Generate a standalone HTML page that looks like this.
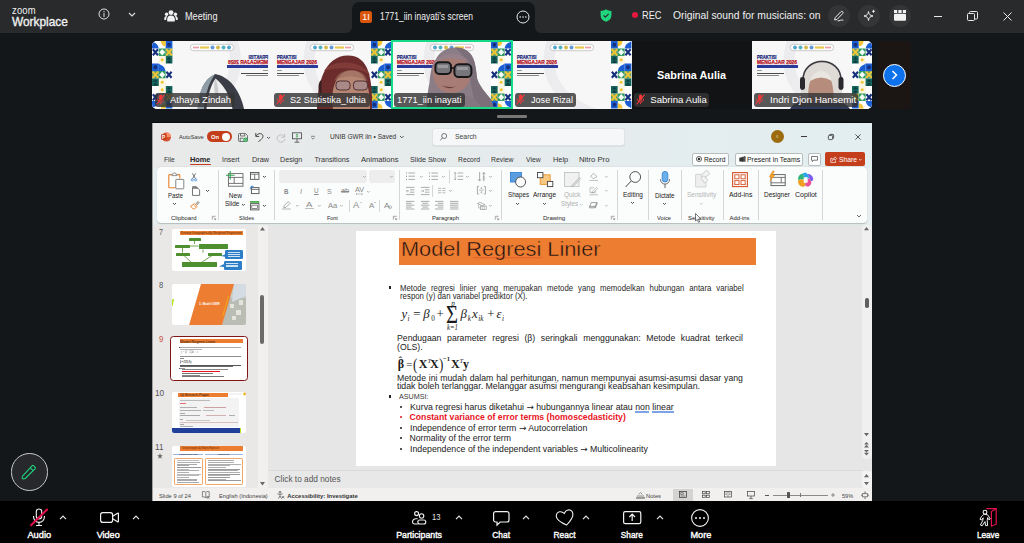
<!DOCTYPE html>
<html><head><meta charset="utf-8"><title>Zoom Meeting</title>
<style>
*{box-sizing:border-box;margin:0;padding:0}
html,body{width:1024px;height:543px;overflow:hidden;background:#14171a;font-family:"Liberation Sans",sans-serif;}
.a{position:absolute}
.t{position:absolute;white-space:nowrap;line-height:1}
svg{position:absolute;overflow:visible}
#topbar{position:absolute;left:0;top:0;width:1024px;height:33px;background:#292a2c;color:#f0f0f0}
#bottombar{position:absolute;left:0;top:501px;width:1024px;height:42px;background:#000;color:#fff}
#ppt{position:absolute;left:152px;top:123px;width:720px;height:378px;background:#e6eeef;overflow:hidden;color:#222}
.th{position:absolute;top:41px;width:120px;height:67.7px;overflow:hidden;background:#f7f7f8}
.nm{position:absolute;height:14.5px;border-radius:3px;background:rgba(52,52,54,.82)}
</style></head><body>
<div id="topbar">
<div class="t" style="font-size:10.5px;left:12.00px;top:5.00px;transform:scaleX(0.896);transform-origin:0 0;letter-spacing:0.2px;">zoom</div>
<div class="t" style="font-size:12.2px;left:12.00px;top:16.00px;transform:scaleX(0.975);transform-origin:0 0;-webkit-text-stroke:0.35px #f0f0f0;">Workplace</div>
<svg style="left:98.00px;top:7.50px;" width="12" height="12" viewBox="0 0 12 12" ><circle cx="6" cy="6" r="5" fill="none" stroke="#e0e0e0" stroke-width="1"/><rect x="5.5" y="5" width="1" height="4" fill="#e0e0e0"/><rect x="5.5" y="3" width="1" height="1.2" fill="#e0e0e0"/></svg>
<svg style="left:128.00px;top:11.50px;" width="8" height="5" viewBox="0 0 8 5" ><path d="M1 1 L4 4 L7 1" fill="none" stroke="#e0e0e0" stroke-width="1.1"/></svg>
<svg style="left:164.00px;top:9.00px;" width="14" height="14" viewBox="0 0 14 14" fill="#f2f2f2"><circle cx="7" cy="3.6" r="2.4"/><circle cx="2.6" cy="5.2" r="1.7"/><circle cx="11.4" cy="5.2" r="1.7"/><path d="M3.2 12.5 v-2.2 a3.8 3.8 0 0 1 7.6 0 v2.2 z"/><path d="M0.3 11 v-1.6 a2.3 2.3 0 0 1 2.9 -2.2 a5 5 0 0 0 -1 3.8z"/><path d="M13.7 11 v-1.6 a2.3 2.3 0 0 0 -2.9 -2.2 a5 5 0 0 1 1 3.8z"/></svg>
<div class="t" style="font-size:10.5px;left:184.50px;top:11.00px;transform:scaleX(0.870);transform-origin:0 0;">Meeting</div>
<div class="a" style="left:352.00px;top:2.00px;width:183.00px;height:31.00px;background:#14171a;border-radius:7px 7px 0 0;"></div>
<svg style="left:346.00px;top:27.00px;" width="6" height="6" viewBox="0 0 6 6" ><path d="M6 0 V6 H0 A6 6 0 0 0 6 0z" fill="#14171a"/></svg>
<svg style="left:535.00px;top:27.00px;" width="6" height="6" viewBox="0 0 6 6" ><path d="M0 0 V6 H6 A6 6 0 0 1 0 0z" fill="#14171a"/></svg>
<div class="a" style="left:360.00px;top:10.50px;width:12.00px;height:12.50px;background:#d9560b;border-radius:2.5px;"></div>
<div class="t" style="font-size:9px;color:#fff;left:362.25px;top:13.00px;">1I</div>
<div class="t" style="font-size:10.5px;left:380.00px;top:11.00px;transform:scaleX(0.811);transform-origin:0 0;">1771_iin inayati's screen</div>
<svg style="left:516.00px;top:9.50px;" width="14" height="14" viewBox="0 0 14 14" ><circle cx="7" cy="7" r="6" fill="none" stroke="#e8e8e8" stroke-width="1"/><circle cx="4.2" cy="7" r="0.8" fill="#e8e8e8"/><circle cx="7" cy="7" r="0.8" fill="#e8e8e8"/><circle cx="9.8" cy="7" r="0.8" fill="#e8e8e8"/></svg>
<svg style="left:600.00px;top:8.50px;" width="12" height="13" viewBox="0 0 12 13" ><path d="M6 0.3 C4.5 1.6 2.5 2 0.6 2 V6.5 C0.6 9.6 3 11.8 6 12.8 C9 11.8 11.4 9.6 11.4 6.5 V2 C9.5 2 7.5 1.6 6 0.3z" fill="#1fd67e"/><path d="M3.6 6.4 L5.3 8.1 L8.6 4.8" fill="none" stroke="#292a2c" stroke-width="1.2"/></svg>
<div class="a" style="left:631.50px;top:12.00px;width:6.00px;height:6.00px;background:#e8173f;border-radius:50%;"></div>
<div class="t" style="font-size:10.8px;left:641.50px;top:10.00px;transform:scaleX(0.855);transform-origin:0 0;">REC</div>
<div class="t" style="font-size:10.8px;left:673.00px;top:10.00px;transform:scaleX(0.956);transform-origin:0 0;">Original sound for musicians: on</div>
<div class="a" style="left:828.00px;top:5.00px;width:22.00px;height:22.00px;background:#343537;border-radius:50%;"></div>
<div class="a" style="left:858.00px;top:5.00px;width:22.00px;height:22.00px;background:#343537;border-radius:50%;"></div>
<div class="a" style="left:889.00px;top:5.00px;width:22.00px;height:22.00px;background:#343537;border-radius:50%;"></div>
<svg style="left:833.00px;top:10.00px;" width="12" height="12" viewBox="0 0 12 12" fill="none" stroke="#eee" stroke-width="1"><path d="M2.2 7.6 L7.8 1.8 a1.2 1.2 0 0 1 1.9 1.7 L4.1 9.4 L1.6 10 z"/><path d="M4.5 10.8 c2 .6 3.5 -1.6 5.8 -.6"/></svg>
<svg style="left:863.00px;top:9.00px;" width="13" height="13" viewBox="0 0 13 13" fill="none" stroke="#eee" stroke-width="1"><path d="M5.5 2.5 C6 5.5 7 6.5 10 7 C7 7.5 6 8.5 5.5 11.5 C5 8.5 4 7.5 1 7 C4 6.5 5 5.5 5.5 2.5z"/><path d="M10.5 0.8 v3 M9 2.3 h3" stroke-width="0.9"/></svg>
<svg style="left:894.00px;top:10.00px;" width="12" height="11" viewBox="0 0 12 11" fill="#f2f2f2"><rect x="0" y="0" width="3.2" height="3"/><rect x="4.4" y="0" width="3.2" height="3"/><rect x="8.8" y="0" width="3.2" height="3"/><rect x="0" y="3.8" width="12" height="7" rx="1"/></svg>
<div class="a" style="left:934.00px;top:16.00px;width:8.00px;height:1.00px;background:#e8e8e8;"></div>
<svg style="left:967.00px;top:11.00px;" width="11" height="10" viewBox="0 0 11 10" fill="none" stroke="#e8e8e8" stroke-width="1"><rect x="0.5" y="2.5" width="7" height="7" rx="1"/><path d="M2.5 2.5 V1.5 a1 1 0 0 1 1 -1 H9.5 a1 1 0 0 1 1 1 V7 a1 1 0 0 1 -1 1 H7.5"/></svg>
<svg style="left:1003.00px;top:12.00px;" width="9" height="9" viewBox="0 0 9 9" fill="none" stroke="#e8e8e8" stroke-width="1"><path d="M0.5 0.5 L8.5 8.5 M8.5 0.5 L0.5 8.5"/></svg>
</div>
<div id="thumbs">
<div class="th" style="left:152px;border-radius:5px 0 0 5px"><svg style="left:0px;top:0" width="20.4" height="68" viewBox="0 0 20.4 68"><g transform="translate(20.4 0) scale(-1 1)"><rect x="0" y="0" width="20.4" height="68" fill="#fdfdfd"/><rect x="0.0" y="0.0" width="6.8" height="7.5" fill="#1c5fd3"/><circle cx="3.4" cy="3.75" r="1.90" fill="#16307c"/><path d="M6.8 0.0 H11.559999999999999 A4.76 5.25 0 0 1 6.8 5.25z" fill="#f1c535"/><path d="M13.6 7.5 C14.959999999999999 1.5 18.36 2.25 20.4 0.0 V7.5z" fill="#1c5fd3"/><rect x="0.0" y="7.5" width="6.8" height="7.5" fill="#5d9b6e"/><path d="M0.6 8.1 L6.2 14.4 M6.2 8.1 L0.6 14.4" stroke="#f1c535" stroke-width="2"/><rect x="6.8" y="7.5" width="6.8" height="7.5" fill="#2f9a5f"/><path d="M10.2 7.9 L13.2 11.25 L10.2 14.6 L7.2 11.25z" fill="#f4fbf6"/><path d="M14.4 8.3 L19.599999999999998 14.2 M19.599999999999998 8.3 L14.4 14.2" stroke="#16307c" stroke-width="2.1"/><rect x="0.0" y="15.0" width="6.8" height="7.5" fill="#17665c"/><path d="M1.0 18.375 L3.4 15.8 L5.8 18.375z M1.0 21.9 L3.4 18.75 L5.8 21.9z" fill="#0d3f45"/><rect x="6.8" y="15.0" width="6.8" height="7.5" fill="#fbf6df"/><circle cx="10.2" cy="18.75" r="1.5" fill="#f1c535"/><path d="M6.8 30.0 C8.16 24.0 11.559999999999999 24.75 13.6 22.5 V30.0z" fill="#1c5fd3"/><rect x="13.6" y="22.5" width="6.8" height="7.5" fill="#1c5fd3"/><circle cx="17.0" cy="26.25" r="1.90" fill="#16307c"/><path d="M0.8 30.8 L6.0 36.7 M6.0 30.8 L0.8 36.7" stroke="#16307c" stroke-width="2.1"/><rect x="6.8" y="30.0" width="6.8" height="7.5" fill="#2f9a5f"/><path d="M10.2 30.4 L13.2 33.75 L10.2 37.1 L7.2 33.75z" fill="#f4fbf6"/><rect x="13.6" y="30.0" width="6.8" height="7.5" fill="#5d9b6e"/><path d="M14.2 30.6 L19.799999999999997 36.9 M19.799999999999997 30.6 L14.2 36.9" stroke="#f1c535" stroke-width="2"/><rect x="6.8" y="37.5" width="6.8" height="7.5" fill="#fbf6df"/><circle cx="10.2" cy="41.25" r="1.5" fill="#f1c535"/><rect x="13.6" y="37.5" width="6.8" height="7.5" fill="#17665c"/><path d="M14.6 40.875 L17.0 38.3 L19.4 40.875z M14.6 44.4 L17.0 41.25 L19.4 44.4z" fill="#0d3f45"/><rect x="0.0" y="45.0" width="6.8" height="7.5" fill="#17665c"/><path d="M1.0 48.375 L3.4 45.8 L5.8 48.375z M1.0 51.9 L3.4 48.75 L5.8 51.9z" fill="#0d3f45"/><rect x="6.8" y="45.0" width="6.8" height="7.5" fill="#fbf6df"/><circle cx="10.2" cy="48.75" r="1.5" fill="#f1c535"/><rect x="0.0" y="52.5" width="6.8" height="7.5" fill="#5d9b6e"/><path d="M0.6 53.1 L6.2 59.4 M6.2 53.1 L0.6 59.4" stroke="#f1c535" stroke-width="2"/><rect x="6.8" y="52.5" width="6.8" height="7.5" fill="#2f9a5f"/><path d="M10.2 52.9 L13.2 56.25 L10.2 59.6 L7.2 56.25z" fill="#f4fbf6"/><path d="M14.4 53.3 L19.599999999999998 59.2 M19.599999999999998 53.3 L14.4 59.2" stroke="#16307c" stroke-width="2.1"/><rect x="0.0" y="60.0" width="6.8" height="7.5" fill="#1c5fd3"/><circle cx="3.4" cy="63.75" r="1.90" fill="#16307c"/><path d="M6.8 67.5 H11.559999999999999 A4.76 5.25 0 0 0 6.8 62.25z" fill="#f1c535"/><path d="M13.6 60.0 C14.959999999999999 66.0 18.36 65.25 20.4 67.5 V60.0z" fill="#1c5fd3"/></g></svg><svg style="left:0;top:0" width="120" height="68" viewBox="0 0 120 68"><g transform="translate(120 0) scale(-1 1)"><path d="M46 0 C34 30 49 55 84 68 H62 C34 52 26 28 34 0z" fill="#ececee"/></g></svg><div class="a" style="left:72px;top:12px;width:44px;height:26px;transform:scaleX(-1);"><div class="t" style="font-size:5px;font-weight:bold;color:#1d2a7a;left:0.00px;top:2.00px;transform:scaleX(0.836);transform-origin:0 0;-webkit-text-stroke:.25px #1d2a7a;">PRAKTISI</div><div class="t" style="font-size:5px;font-weight:bold;color:#b8141f;left:0.00px;top:7.00px;transform:scaleX(0.973);transform-origin:0 0;-webkit-text-stroke:.25px #b8141f;">MENGAJAR 2026</div><div class="a" style="left:0.00px;top:12.40px;width:41.00px;height:2.60px;background:#2a3a9a;"></div><div class="a" style="left:0.00px;top:17.20px;width:5.00px;height:0.80px;background:#999;"></div><div class="a" style="left:0.00px;top:19.50px;width:27.00px;height:1.10px;background:#4a4a4a;"></div><div class="a" style="left:0.00px;top:22.00px;width:22.00px;height:0.90px;background:#888;"></div></div><svg style="left:38px;top:3.2px;transform:scaleX(-1);" width="44" height="7" viewBox="0 0 44 7"><rect x=".3" y=".3" width="43.4" height="6.4" rx="3.2" fill="#fff" stroke="#9a9a9a" stroke-width=".5"/><circle cx="5.0" cy="3.5" r="2" fill="#2a8fc0" opacity=".8"/><circle cx="10.5" cy="3.5" r="2" fill="#2aa0b0" opacity=".8"/><circle cx="16.0" cy="3.5" r="2" fill="#c9a820" opacity=".8"/><circle cx="21.5" cy="3.5" r="2" fill="#3a7fd0" opacity=".8"/><rect x="25" y="2.4" width="9" height="2.2" fill="#e8c850"/><rect x="35" y="2.6" width="6" height="1.8" fill="#e7a0a8"/></svg><svg style="left:0;top:0" width="120" height="68" viewBox="0 0 120 68"><path d="M45.7 68 C47 50 52 38 63.4 33.1 C78 36 88 50 92 68z" fill="#3a3d45"/><path d="M45.7 68 C47 50 52 38 63.4 33.1 C58 40 53 52 52 68z" fill="#8f9ca6"/><path d="M54.5 68 C55.5 54 59.5 43 63.6 37.6 C71 44 78 53 80.5 68z" fill="#efeff0"/><path d="M63.6 37.6 C66 44 67 52 66 60 C62 52 61 44 63.6 37.6z" fill="#c9cacd"/></svg><div class="nm" style="left:2.8px;top:51.5px;width:80.4px"></div><svg style="left:4.40px;top:53.30px;" width="9" height="11" viewBox="0 0 9 11" ><rect x="3" y=".5" width="3.2" height="6" rx="1.6" fill="#f03a3a"/><path d="M1.4 4.8 a3.2 3.2 0 0 0 6.4 0 M4.6 8 V10" fill="none" stroke="#f03a3a" stroke-width=".9"/><path d="M.6 10.4 L8.6 .6" stroke="#f03a3a" stroke-width="1.1"/></svg><div class="t" style="font-size:9.6px;color:#fff;left:18.40px;top:54.00px;transform:scaleX(0.987);transform-origin:0 0;">Athaya Zindah</div></div>
<div class="th" style="left:272px"><svg style="left:99.2px;top:0" width="20.4" height="68" viewBox="0 0 20.4 68"><g><rect x="0" y="0" width="20.4" height="68" fill="#fdfdfd"/><rect x="0.0" y="0.0" width="6.8" height="7.5" fill="#1c5fd3"/><circle cx="3.4" cy="3.75" r="1.90" fill="#16307c"/><path d="M6.8 0.0 H11.559999999999999 A4.76 5.25 0 0 1 6.8 5.25z" fill="#f1c535"/><path d="M13.6 7.5 C14.959999999999999 1.5 18.36 2.25 20.4 0.0 V7.5z" fill="#1c5fd3"/><rect x="0.0" y="7.5" width="6.8" height="7.5" fill="#5d9b6e"/><path d="M0.6 8.1 L6.2 14.4 M6.2 8.1 L0.6 14.4" stroke="#f1c535" stroke-width="2"/><rect x="6.8" y="7.5" width="6.8" height="7.5" fill="#2f9a5f"/><path d="M10.2 7.9 L13.2 11.25 L10.2 14.6 L7.2 11.25z" fill="#f4fbf6"/><path d="M14.4 8.3 L19.599999999999998 14.2 M19.599999999999998 8.3 L14.4 14.2" stroke="#16307c" stroke-width="2.1"/><rect x="0.0" y="15.0" width="6.8" height="7.5" fill="#17665c"/><path d="M1.0 18.375 L3.4 15.8 L5.8 18.375z M1.0 21.9 L3.4 18.75 L5.8 21.9z" fill="#0d3f45"/><rect x="6.8" y="15.0" width="6.8" height="7.5" fill="#fbf6df"/><circle cx="10.2" cy="18.75" r="1.5" fill="#f1c535"/><path d="M6.8 30.0 C8.16 24.0 11.559999999999999 24.75 13.6 22.5 V30.0z" fill="#1c5fd3"/><rect x="13.6" y="22.5" width="6.8" height="7.5" fill="#1c5fd3"/><circle cx="17.0" cy="26.25" r="1.90" fill="#16307c"/><path d="M0.8 30.8 L6.0 36.7 M6.0 30.8 L0.8 36.7" stroke="#16307c" stroke-width="2.1"/><rect x="6.8" y="30.0" width="6.8" height="7.5" fill="#2f9a5f"/><path d="M10.2 30.4 L13.2 33.75 L10.2 37.1 L7.2 33.75z" fill="#f4fbf6"/><rect x="13.6" y="30.0" width="6.8" height="7.5" fill="#5d9b6e"/><path d="M14.2 30.6 L19.799999999999997 36.9 M19.799999999999997 30.6 L14.2 36.9" stroke="#f1c535" stroke-width="2"/><rect x="6.8" y="37.5" width="6.8" height="7.5" fill="#fbf6df"/><circle cx="10.2" cy="41.25" r="1.5" fill="#f1c535"/><rect x="13.6" y="37.5" width="6.8" height="7.5" fill="#17665c"/><path d="M14.6 40.875 L17.0 38.3 L19.4 40.875z M14.6 44.4 L17.0 41.25 L19.4 44.4z" fill="#0d3f45"/><rect x="0.0" y="45.0" width="6.8" height="7.5" fill="#17665c"/><path d="M1.0 48.375 L3.4 45.8 L5.8 48.375z M1.0 51.9 L3.4 48.75 L5.8 51.9z" fill="#0d3f45"/><rect x="6.8" y="45.0" width="6.8" height="7.5" fill="#fbf6df"/><circle cx="10.2" cy="48.75" r="1.5" fill="#f1c535"/><rect x="0.0" y="52.5" width="6.8" height="7.5" fill="#5d9b6e"/><path d="M0.6 53.1 L6.2 59.4 M6.2 53.1 L0.6 59.4" stroke="#f1c535" stroke-width="2"/><rect x="6.8" y="52.5" width="6.8" height="7.5" fill="#2f9a5f"/><path d="M10.2 52.9 L13.2 56.25 L10.2 59.6 L7.2 56.25z" fill="#f4fbf6"/><path d="M14.4 53.3 L19.599999999999998 59.2 M19.599999999999998 53.3 L14.4 59.2" stroke="#16307c" stroke-width="2.1"/><rect x="0.0" y="60.0" width="6.8" height="7.5" fill="#1c5fd3"/><circle cx="3.4" cy="63.75" r="1.90" fill="#16307c"/><path d="M6.8 67.5 H11.559999999999999 A4.76 5.25 0 0 0 6.8 62.25z" fill="#f1c535"/><path d="M13.6 60.0 C14.959999999999999 66.0 18.36 65.25 20.4 67.5 V60.0z" fill="#1c5fd3"/></g></svg><svg style="left:0;top:0" width="120" height="68" viewBox="0 0 120 68"><g><path d="M46.5 0 C34.5 30 49.5 55 84.5 68 H62.5 C34.5 52 26.5 28 34.5 0z" fill="#ececee"/></g></svg><div class="a" style="left:4.5px;top:12px;width:44px;height:26px;"><div class="t" style="font-size:5px;font-weight:bold;color:#1d2a7a;left:0.00px;top:2.00px;transform:scaleX(0.836);transform-origin:0 0;-webkit-text-stroke:.25px #1d2a7a;">PRAKTISI</div><div class="t" style="font-size:5px;font-weight:bold;color:#b8141f;left:0.00px;top:7.00px;transform:scaleX(0.973);transform-origin:0 0;-webkit-text-stroke:.25px #b8141f;">MENGAJAR 2026</div><div class="a" style="left:0.00px;top:12.40px;width:41.00px;height:2.60px;background:#2a3a9a;"></div><div class="a" style="left:0.00px;top:17.20px;width:5.00px;height:0.80px;background:#999;"></div><div class="a" style="left:0.00px;top:19.50px;width:27.00px;height:1.10px;background:#4a4a4a;"></div><div class="a" style="left:0.00px;top:22.00px;width:22.00px;height:0.90px;background:#888;"></div></div><svg style="left:37.8px;top:3.2px;" width="44" height="7" viewBox="0 0 44 7"><rect x=".3" y=".3" width="43.4" height="6.4" rx="3.2" fill="#fff" stroke="#9a9a9a" stroke-width=".5"/><circle cx="5.0" cy="3.5" r="2" fill="#2a8fc0" opacity=".8"/><circle cx="10.5" cy="3.5" r="2" fill="#2aa0b0" opacity=".8"/><circle cx="16.0" cy="3.5" r="2" fill="#c9a820" opacity=".8"/><circle cx="21.5" cy="3.5" r="2" fill="#3a7fd0" opacity=".8"/><rect x="25" y="2.4" width="9" height="2.2" fill="#e8c850"/><rect x="35" y="2.6" width="6" height="1.8" fill="#e7a0a8"/></svg><svg style="left:0;top:0" width="120" height="68" viewBox="0 0 120 68"><path d="M45 68 C45 44 52 14.5 76 14.5 C97 14.5 100.5 38 100 68z" fill="#6b2c2b"/><path d="M52 30 C58 19 90 17 98 34 C86 26 64 26 52 30z" fill="#803a37"/><path d="M61 68 C58 48 64 29.5 80 29.5 C93 29.5 98 44 98 68z" fill="#b78673"/><path d="M62 40 q16 -9 34 0 q-4 -11 -17 -11 q-12 0 -17 11z" fill="#9a6a5c" opacity=".6"/><rect x="64" y="40" width="14" height="9" rx="3.4" fill="#a98a86" stroke="#4e3034" stroke-width="1"/><rect x="81.5" y="40" width="14" height="9" rx="3.4" fill="#a98a86" stroke="#4e3034" stroke-width="1"/><path d="M49.5 39 c-4 2 -4 12 0 14z" fill="#3a2020"/></svg><div class="nm" style="left:2px;top:51.5px;width:96px"></div><svg style="left:3.60px;top:53.30px;" width="9" height="11" viewBox="0 0 9 11" ><rect x="3" y=".5" width="3.2" height="6" rx="1.6" fill="#f03a3a"/><path d="M1.4 4.8 a3.2 3.2 0 0 0 6.4 0 M4.6 8 V10" fill="none" stroke="#f03a3a" stroke-width=".9"/><path d="M.6 10.4 L8.6 .6" stroke="#f03a3a" stroke-width="1.1"/></svg><div class="t" style="font-size:9.6px;color:#fff;left:18.40px;top:54.00px;transform:scaleX(0.956);transform-origin:0 0;">S2 Statistika_Idhia</div></div>
<div class="th" style="left:392px"><svg style="left:99.2px;top:0" width="20.4" height="68" viewBox="0 0 20.4 68"><g><rect x="0" y="0" width="20.4" height="68" fill="#fdfdfd"/><rect x="0.0" y="0.0" width="6.8" height="7.5" fill="#1c5fd3"/><circle cx="3.4" cy="3.75" r="1.90" fill="#16307c"/><path d="M6.8 0.0 H11.559999999999999 A4.76 5.25 0 0 1 6.8 5.25z" fill="#f1c535"/><path d="M13.6 7.5 C14.959999999999999 1.5 18.36 2.25 20.4 0.0 V7.5z" fill="#1c5fd3"/><rect x="0.0" y="7.5" width="6.8" height="7.5" fill="#5d9b6e"/><path d="M0.6 8.1 L6.2 14.4 M6.2 8.1 L0.6 14.4" stroke="#f1c535" stroke-width="2"/><rect x="6.8" y="7.5" width="6.8" height="7.5" fill="#2f9a5f"/><path d="M10.2 7.9 L13.2 11.25 L10.2 14.6 L7.2 11.25z" fill="#f4fbf6"/><path d="M14.4 8.3 L19.599999999999998 14.2 M19.599999999999998 8.3 L14.4 14.2" stroke="#16307c" stroke-width="2.1"/><rect x="0.0" y="15.0" width="6.8" height="7.5" fill="#17665c"/><path d="M1.0 18.375 L3.4 15.8 L5.8 18.375z M1.0 21.9 L3.4 18.75 L5.8 21.9z" fill="#0d3f45"/><rect x="6.8" y="15.0" width="6.8" height="7.5" fill="#fbf6df"/><circle cx="10.2" cy="18.75" r="1.5" fill="#f1c535"/><path d="M6.8 30.0 C8.16 24.0 11.559999999999999 24.75 13.6 22.5 V30.0z" fill="#1c5fd3"/><rect x="13.6" y="22.5" width="6.8" height="7.5" fill="#1c5fd3"/><circle cx="17.0" cy="26.25" r="1.90" fill="#16307c"/><path d="M0.8 30.8 L6.0 36.7 M6.0 30.8 L0.8 36.7" stroke="#16307c" stroke-width="2.1"/><rect x="6.8" y="30.0" width="6.8" height="7.5" fill="#2f9a5f"/><path d="M10.2 30.4 L13.2 33.75 L10.2 37.1 L7.2 33.75z" fill="#f4fbf6"/><rect x="13.6" y="30.0" width="6.8" height="7.5" fill="#5d9b6e"/><path d="M14.2 30.6 L19.799999999999997 36.9 M19.799999999999997 30.6 L14.2 36.9" stroke="#f1c535" stroke-width="2"/><rect x="6.8" y="37.5" width="6.8" height="7.5" fill="#fbf6df"/><circle cx="10.2" cy="41.25" r="1.5" fill="#f1c535"/><rect x="13.6" y="37.5" width="6.8" height="7.5" fill="#17665c"/><path d="M14.6 40.875 L17.0 38.3 L19.4 40.875z M14.6 44.4 L17.0 41.25 L19.4 44.4z" fill="#0d3f45"/><rect x="0.0" y="45.0" width="6.8" height="7.5" fill="#17665c"/><path d="M1.0 48.375 L3.4 45.8 L5.8 48.375z M1.0 51.9 L3.4 48.75 L5.8 51.9z" fill="#0d3f45"/><rect x="6.8" y="45.0" width="6.8" height="7.5" fill="#fbf6df"/><circle cx="10.2" cy="48.75" r="1.5" fill="#f1c535"/><rect x="0.0" y="52.5" width="6.8" height="7.5" fill="#5d9b6e"/><path d="M0.6 53.1 L6.2 59.4 M6.2 53.1 L0.6 59.4" stroke="#f1c535" stroke-width="2"/><rect x="6.8" y="52.5" width="6.8" height="7.5" fill="#2f9a5f"/><path d="M10.2 52.9 L13.2 56.25 L10.2 59.6 L7.2 56.25z" fill="#f4fbf6"/><path d="M14.4 53.3 L19.599999999999998 59.2 M19.599999999999998 53.3 L14.4 59.2" stroke="#16307c" stroke-width="2.1"/><rect x="0.0" y="60.0" width="6.8" height="7.5" fill="#1c5fd3"/><circle cx="3.4" cy="63.75" r="1.90" fill="#16307c"/><path d="M6.8 67.5 H11.559999999999999 A4.76 5.25 0 0 0 6.8 62.25z" fill="#f1c535"/><path d="M13.6 60.0 C14.959999999999999 66.0 18.36 65.25 20.4 67.5 V60.0z" fill="#1c5fd3"/></g></svg><svg style="left:0;top:0" width="120" height="68" viewBox="0 0 120 68"><g><path d="M46.5 0 C34.5 30 49.5 55 84.5 68 H62.5 C34.5 52 26.5 28 34.5 0z" fill="#ececee"/></g></svg><div class="a" style="left:4.5px;top:12px;width:44px;height:26px;"><div class="t" style="font-size:5px;font-weight:bold;color:#1d2a7a;left:0.00px;top:2.00px;transform:scaleX(0.836);transform-origin:0 0;-webkit-text-stroke:.25px #1d2a7a;">PRAKTISI</div><div class="t" style="font-size:5px;font-weight:bold;color:#b8141f;left:0.00px;top:7.00px;transform:scaleX(0.973);transform-origin:0 0;-webkit-text-stroke:.25px #b8141f;">MENGAJAR 2026</div><div class="a" style="left:0.00px;top:12.40px;width:41.00px;height:2.60px;background:#2a3a9a;"></div><div class="a" style="left:0.00px;top:17.20px;width:5.00px;height:0.80px;background:#999;"></div><div class="a" style="left:0.00px;top:19.50px;width:27.00px;height:1.10px;background:#4a4a4a;"></div><div class="a" style="left:0.00px;top:22.00px;width:22.00px;height:0.90px;background:#888;"></div></div><svg style="left:37.8px;top:3.2px;" width="44" height="7" viewBox="0 0 44 7"><rect x=".3" y=".3" width="43.4" height="6.4" rx="3.2" fill="#fff" stroke="#9a9a9a" stroke-width=".5"/><circle cx="5.0" cy="3.5" r="2" fill="#2a8fc0" opacity=".8"/><circle cx="10.5" cy="3.5" r="2" fill="#2aa0b0" opacity=".8"/><circle cx="16.0" cy="3.5" r="2" fill="#c9a820" opacity=".8"/><circle cx="21.5" cy="3.5" r="2" fill="#3a7fd0" opacity=".8"/><rect x="25" y="2.4" width="9" height="2.2" fill="#e8c850"/><rect x="35" y="2.6" width="6" height="1.8" fill="#e7a0a8"/></svg><svg style="left:0;top:0" width="120" height="68" viewBox="0 0 120 68"><path d="M34.8 68 C35 56 36 48 37.5 42 C38.5 30 40 24 43 20 C47 11 54 6.5 63.4 6.5 C71 6.5 77 10 79.8 14.7 C84 22 84 30 85.2 37.9 C88 46 94 52 98.9 58.3 C100.5 62 101.2 65 101.6 68z" fill="#8b7d87"/><path d="M63.4 6.5 C71 6.5 77 10 79.8 14.7 C84 22 84 30 85.2 37.9 C88 46 94 52 98.9 58.3 L101.6 68 H84 C80 52 78 30 72 16z" fill="#7d6f7a"/><path d="M41 34 C39.5 22 47 13.4 59 13.4 C71 13.4 78.6 22 78 35 C77.5 45 70 52 59 52 C49 52 42 45 41 34z" fill="#a67c74"/><path d="M42 22 q17 -9 36 0 q-6 -9 -18 -9 q-12 0 -18 9z" fill="#96808a"/><rect x="43.4" y="21.3" width="15.6" height="11.6" rx="4" fill="#77767a" stroke="#17171a" stroke-width="2"/><rect x="62.4" y="23.3" width="17" height="12.8" rx="4.4" fill="#77767a" stroke="#17171a" stroke-width="2"/><path d="M46 24 h10 v3 h-10z M65 26 h11 v3 h-11z" fill="#a9a9ac" opacity=".7"/><path d="M58.6 27 h4" stroke="#17171a" stroke-width="1.6"/><path d="M50 44.6 q7 2.6 13.5 0.6 q-6 4.4 -13.5 -.6z" fill="#6b3a3a"/><path d="M34.8 68 C36 60 40 54 46 55 C52 60 62 62 70 56 C78 52 86 60 90 68z" fill="#85777f"/></svg><div class="nm" style="left:2.1px;top:51.5px;width:70.6px"></div><div class="t" style="font-size:9.6px;color:#fff;left:5.10px;top:54.00px;transform:scaleX(0.967);transform-origin:0 0;">1771_iin inayati</div></div>
<div class="a" style="left:391.00px;top:40.00px;width:121.80px;height:69.00px;border:2px solid #16da88;"></div>
<div class="th" style="left:513px;width:119px"><svg style="left:98.2px;top:0" width="20.4" height="68" viewBox="0 0 20.4 68"><g><rect x="0" y="0" width="20.4" height="68" fill="#fdfdfd"/><rect x="0.0" y="0.0" width="6.8" height="7.5" fill="#1c5fd3"/><circle cx="3.4" cy="3.75" r="1.90" fill="#16307c"/><path d="M6.8 0.0 H11.559999999999999 A4.76 5.25 0 0 1 6.8 5.25z" fill="#f1c535"/><path d="M13.6 7.5 C14.959999999999999 1.5 18.36 2.25 20.4 0.0 V7.5z" fill="#1c5fd3"/><rect x="0.0" y="7.5" width="6.8" height="7.5" fill="#5d9b6e"/><path d="M0.6 8.1 L6.2 14.4 M6.2 8.1 L0.6 14.4" stroke="#f1c535" stroke-width="2"/><rect x="6.8" y="7.5" width="6.8" height="7.5" fill="#2f9a5f"/><path d="M10.2 7.9 L13.2 11.25 L10.2 14.6 L7.2 11.25z" fill="#f4fbf6"/><path d="M14.4 8.3 L19.599999999999998 14.2 M19.599999999999998 8.3 L14.4 14.2" stroke="#16307c" stroke-width="2.1"/><rect x="0.0" y="15.0" width="6.8" height="7.5" fill="#17665c"/><path d="M1.0 18.375 L3.4 15.8 L5.8 18.375z M1.0 21.9 L3.4 18.75 L5.8 21.9z" fill="#0d3f45"/><rect x="6.8" y="15.0" width="6.8" height="7.5" fill="#fbf6df"/><circle cx="10.2" cy="18.75" r="1.5" fill="#f1c535"/><path d="M6.8 30.0 C8.16 24.0 11.559999999999999 24.75 13.6 22.5 V30.0z" fill="#1c5fd3"/><rect x="13.6" y="22.5" width="6.8" height="7.5" fill="#1c5fd3"/><circle cx="17.0" cy="26.25" r="1.90" fill="#16307c"/><path d="M0.8 30.8 L6.0 36.7 M6.0 30.8 L0.8 36.7" stroke="#16307c" stroke-width="2.1"/><rect x="6.8" y="30.0" width="6.8" height="7.5" fill="#2f9a5f"/><path d="M10.2 30.4 L13.2 33.75 L10.2 37.1 L7.2 33.75z" fill="#f4fbf6"/><rect x="13.6" y="30.0" width="6.8" height="7.5" fill="#5d9b6e"/><path d="M14.2 30.6 L19.799999999999997 36.9 M19.799999999999997 30.6 L14.2 36.9" stroke="#f1c535" stroke-width="2"/><rect x="6.8" y="37.5" width="6.8" height="7.5" fill="#fbf6df"/><circle cx="10.2" cy="41.25" r="1.5" fill="#f1c535"/><rect x="13.6" y="37.5" width="6.8" height="7.5" fill="#17665c"/><path d="M14.6 40.875 L17.0 38.3 L19.4 40.875z M14.6 44.4 L17.0 41.25 L19.4 44.4z" fill="#0d3f45"/><rect x="0.0" y="45.0" width="6.8" height="7.5" fill="#17665c"/><path d="M1.0 48.375 L3.4 45.8 L5.8 48.375z M1.0 51.9 L3.4 48.75 L5.8 51.9z" fill="#0d3f45"/><rect x="6.8" y="45.0" width="6.8" height="7.5" fill="#fbf6df"/><circle cx="10.2" cy="48.75" r="1.5" fill="#f1c535"/><rect x="0.0" y="52.5" width="6.8" height="7.5" fill="#5d9b6e"/><path d="M0.6 53.1 L6.2 59.4 M6.2 53.1 L0.6 59.4" stroke="#f1c535" stroke-width="2"/><rect x="6.8" y="52.5" width="6.8" height="7.5" fill="#2f9a5f"/><path d="M10.2 52.9 L13.2 56.25 L10.2 59.6 L7.2 56.25z" fill="#f4fbf6"/><path d="M14.4 53.3 L19.599999999999998 59.2 M19.599999999999998 53.3 L14.4 59.2" stroke="#16307c" stroke-width="2.1"/><rect x="0.0" y="60.0" width="6.8" height="7.5" fill="#1c5fd3"/><circle cx="3.4" cy="63.75" r="1.90" fill="#16307c"/><path d="M6.8 67.5 H11.559999999999999 A4.76 5.25 0 0 0 6.8 62.25z" fill="#f1c535"/><path d="M13.6 60.0 C14.959999999999999 66.0 18.36 65.25 20.4 67.5 V60.0z" fill="#1c5fd3"/></g></svg><svg style="left:0;top:0" width="120" height="68" viewBox="0 0 120 68"><g><path d="M45.5 0 C33.5 30 48.5 55 83.5 68 H61.5 C33.5 52 25.5 28 33.5 0z" fill="#ececee"/></g></svg><div class="a" style="left:3.5px;top:12px;width:44px;height:26px;"><div class="t" style="font-size:5px;font-weight:bold;color:#1d2a7a;left:0.00px;top:2.00px;transform:scaleX(0.836);transform-origin:0 0;-webkit-text-stroke:.25px #1d2a7a;">PRAKTISI</div><div class="t" style="font-size:5px;font-weight:bold;color:#b8141f;left:0.00px;top:7.00px;transform:scaleX(0.973);transform-origin:0 0;-webkit-text-stroke:.25px #b8141f;">MENGAJAR 2026</div><div class="a" style="left:0.00px;top:12.40px;width:41.00px;height:2.60px;background:#2a3a9a;"></div><div class="a" style="left:0.00px;top:17.20px;width:5.00px;height:0.80px;background:#999;"></div><div class="a" style="left:0.00px;top:19.50px;width:27.00px;height:1.10px;background:#4a4a4a;"></div><div class="a" style="left:0.00px;top:22.00px;width:22.00px;height:0.90px;background:#888;"></div></div><svg style="left:36.8px;top:3.2px;" width="44" height="7" viewBox="0 0 44 7"><rect x=".3" y=".3" width="43.4" height="6.4" rx="3.2" fill="#fff" stroke="#9a9a9a" stroke-width=".5"/><circle cx="5.0" cy="3.5" r="2" fill="#2a8fc0" opacity=".8"/><circle cx="10.5" cy="3.5" r="2" fill="#2aa0b0" opacity=".8"/><circle cx="16.0" cy="3.5" r="2" fill="#c9a820" opacity=".8"/><circle cx="21.5" cy="3.5" r="2" fill="#3a7fd0" opacity=".8"/><rect x="25" y="2.4" width="9" height="2.2" fill="#e8c850"/><rect x="35" y="2.6" width="6" height="1.8" fill="#e7a0a8"/></svg><div class="nm" style="left:1.5px;top:51.5px;width:61px"></div><svg style="left:3.10px;top:53.30px;" width="9" height="11" viewBox="0 0 9 11" ><rect x="3" y=".5" width="3.2" height="6" rx="1.6" fill="#f03a3a"/><path d="M1.4 4.8 a3.2 3.2 0 0 0 6.4 0 M4.6 8 V10" fill="none" stroke="#f03a3a" stroke-width=".9"/><path d="M.6 10.4 L8.6 .6" stroke="#f03a3a" stroke-width="1.1"/></svg><div class="t" style="font-size:9.6px;color:#fff;left:17.50px;top:54.00px;transform:scaleX(0.948);transform-origin:0 0;">Jose Rizal</div></div>
<div class="th" style="left:632px;background:#111315"><div class="t" style="font-size:11.8px;font-weight:bold;color:#fff;left:22.01px;top:29.00px;transform:scaleX(0.920);transform-origin:50% 0;">Sabrina Aulia</div><div class="nm" style="left:2px;top:51.5px;width:75.4px"></div><svg style="left:3.60px;top:53.30px;" width="9" height="11" viewBox="0 0 9 11" ><rect x="3" y=".5" width="3.2" height="6" rx="1.6" fill="#f03a3a"/><path d="M1.4 4.8 a3.2 3.2 0 0 0 6.4 0 M4.6 8 V10" fill="none" stroke="#f03a3a" stroke-width=".9"/><path d="M.6 10.4 L8.6 .6" stroke="#f03a3a" stroke-width="1.1"/></svg><div class="t" style="font-size:9.6px;color:#fff;left:18.30px;top:54.00px;">Sabrina Aulia</div></div>
<div class="th" style="left:752px;border-radius:0 5px 5px 0"><svg style="left:99.6px;top:0" width="20.4" height="68" viewBox="0 0 20.4 68"><g><rect x="0" y="0" width="20.4" height="68" fill="#fdfdfd"/><rect x="0.0" y="0.0" width="6.8" height="7.5" fill="#1c5fd3"/><circle cx="3.4" cy="3.75" r="1.90" fill="#16307c"/><path d="M6.8 0.0 H11.559999999999999 A4.76 5.25 0 0 1 6.8 5.25z" fill="#f1c535"/><path d="M13.6 7.5 C14.959999999999999 1.5 18.36 2.25 20.4 0.0 V7.5z" fill="#1c5fd3"/><rect x="0.0" y="7.5" width="6.8" height="7.5" fill="#5d9b6e"/><path d="M0.6 8.1 L6.2 14.4 M6.2 8.1 L0.6 14.4" stroke="#f1c535" stroke-width="2"/><rect x="6.8" y="7.5" width="6.8" height="7.5" fill="#2f9a5f"/><path d="M10.2 7.9 L13.2 11.25 L10.2 14.6 L7.2 11.25z" fill="#f4fbf6"/><path d="M14.4 8.3 L19.599999999999998 14.2 M19.599999999999998 8.3 L14.4 14.2" stroke="#16307c" stroke-width="2.1"/><rect x="0.0" y="15.0" width="6.8" height="7.5" fill="#17665c"/><path d="M1.0 18.375 L3.4 15.8 L5.8 18.375z M1.0 21.9 L3.4 18.75 L5.8 21.9z" fill="#0d3f45"/><rect x="6.8" y="15.0" width="6.8" height="7.5" fill="#fbf6df"/><circle cx="10.2" cy="18.75" r="1.5" fill="#f1c535"/><path d="M6.8 30.0 C8.16 24.0 11.559999999999999 24.75 13.6 22.5 V30.0z" fill="#1c5fd3"/><rect x="13.6" y="22.5" width="6.8" height="7.5" fill="#1c5fd3"/><circle cx="17.0" cy="26.25" r="1.90" fill="#16307c"/><path d="M0.8 30.8 L6.0 36.7 M6.0 30.8 L0.8 36.7" stroke="#16307c" stroke-width="2.1"/><rect x="6.8" y="30.0" width="6.8" height="7.5" fill="#2f9a5f"/><path d="M10.2 30.4 L13.2 33.75 L10.2 37.1 L7.2 33.75z" fill="#f4fbf6"/><rect x="13.6" y="30.0" width="6.8" height="7.5" fill="#5d9b6e"/><path d="M14.2 30.6 L19.799999999999997 36.9 M19.799999999999997 30.6 L14.2 36.9" stroke="#f1c535" stroke-width="2"/><rect x="6.8" y="37.5" width="6.8" height="7.5" fill="#fbf6df"/><circle cx="10.2" cy="41.25" r="1.5" fill="#f1c535"/><rect x="13.6" y="37.5" width="6.8" height="7.5" fill="#17665c"/><path d="M14.6 40.875 L17.0 38.3 L19.4 40.875z M14.6 44.4 L17.0 41.25 L19.4 44.4z" fill="#0d3f45"/><rect x="0.0" y="45.0" width="6.8" height="7.5" fill="#17665c"/><path d="M1.0 48.375 L3.4 45.8 L5.8 48.375z M1.0 51.9 L3.4 48.75 L5.8 51.9z" fill="#0d3f45"/><rect x="6.8" y="45.0" width="6.8" height="7.5" fill="#fbf6df"/><circle cx="10.2" cy="48.75" r="1.5" fill="#f1c535"/><rect x="0.0" y="52.5" width="6.8" height="7.5" fill="#5d9b6e"/><path d="M0.6 53.1 L6.2 59.4 M6.2 53.1 L0.6 59.4" stroke="#f1c535" stroke-width="2"/><rect x="6.8" y="52.5" width="6.8" height="7.5" fill="#2f9a5f"/><path d="M10.2 52.9 L13.2 56.25 L10.2 59.6 L7.2 56.25z" fill="#f4fbf6"/><path d="M14.4 53.3 L19.599999999999998 59.2 M19.599999999999998 53.3 L14.4 59.2" stroke="#16307c" stroke-width="2.1"/><rect x="0.0" y="60.0" width="6.8" height="7.5" fill="#1c5fd3"/><circle cx="3.4" cy="63.75" r="1.90" fill="#16307c"/><path d="M6.8 67.5 H11.559999999999999 A4.76 5.25 0 0 0 6.8 62.25z" fill="#f1c535"/><path d="M13.6 60.0 C14.959999999999999 66.0 18.36 65.25 20.4 67.5 V60.0z" fill="#1c5fd3"/></g></svg><svg style="left:0;top:0" width="120" height="68" viewBox="0 0 120 68"><g><path d="M46.5 0 C34.5 30 49.5 55 84.5 68 H62.5 C34.5 52 26.5 28 34.5 0z" fill="#ececee"/></g></svg><div class="a" style="left:4.5px;top:12px;width:44px;height:26px;"><div class="t" style="font-size:5px;font-weight:bold;color:#1d2a7a;left:0.00px;top:2.00px;transform:scaleX(0.836);transform-origin:0 0;-webkit-text-stroke:.25px #1d2a7a;">PRAKTISI</div><div class="t" style="font-size:5px;font-weight:bold;color:#b8141f;left:0.00px;top:7.00px;transform:scaleX(0.973);transform-origin:0 0;-webkit-text-stroke:.25px #b8141f;">MENGAJAR 2026</div><div class="a" style="left:0.00px;top:12.40px;width:41.00px;height:2.60px;background:#2a3a9a;"></div><div class="a" style="left:0.00px;top:17.20px;width:5.00px;height:0.80px;background:#999;"></div><div class="a" style="left:0.00px;top:19.50px;width:27.00px;height:1.10px;background:#4a4a4a;"></div><div class="a" style="left:0.00px;top:22.00px;width:22.00px;height:0.90px;background:#888;"></div></div><svg style="left:37.8px;top:3.2px;" width="44" height="7" viewBox="0 0 44 7"><rect x=".3" y=".3" width="43.4" height="6.4" rx="3.2" fill="#fff" stroke="#9a9a9a" stroke-width=".5"/><circle cx="5.0" cy="3.5" r="2" fill="#2a8fc0" opacity=".8"/><circle cx="10.5" cy="3.5" r="2" fill="#2aa0b0" opacity=".8"/><circle cx="16.0" cy="3.5" r="2" fill="#c9a820" opacity=".8"/><circle cx="21.5" cy="3.5" r="2" fill="#3a7fd0" opacity=".8"/><rect x="25" y="2.4" width="9" height="2.2" fill="#e8c850"/><rect x="35" y="2.6" width="6" height="1.8" fill="#e7a0a8"/></svg><svg style="left:0;top:0" width="120" height="68" viewBox="0 0 120 68"><path d="M49 68 C47 38 54 19 70 19 C86 19 92 38 90 68z" fill="#dedad5"/><path d="M57 68 C54 44 59 31 69 31 C79 31 83 44 81 68z" fill="#b68d7c"/><path d="M58 40 q11 -7 22 0 q-3 -10 -11 -10 q-8 0 -11 10z" fill="#e9e6e2"/><path d="M51 40 C50 14 90 14 89 40" fill="none" stroke="#3a3a40" stroke-width="1.6"/><rect x="48" y="36" width="5" height="13" rx="2.4" fill="#2a2a2e"/><rect x="86.5" y="36" width="5" height="13" rx="2.4" fill="#2a2a2e"/><path d="M38 68 C42 61 50 60 56 62 H82 C88 60 94 62 98 68z" fill="#2f3a5a"/></svg><div class="nm" style="left:1.8px;top:51.5px;width:104.7px"></div><svg style="left:3.40px;top:53.30px;" width="9" height="11" viewBox="0 0 9 11" ><rect x="3" y=".5" width="3.2" height="6" rx="1.6" fill="#f03a3a"/><path d="M1.4 4.8 a3.2 3.2 0 0 0 6.4 0 M4.6 8 V10" fill="none" stroke="#f03a3a" stroke-width=".9"/><path d="M.6 10.4 L8.6 .6" stroke="#f03a3a" stroke-width="1.1"/></svg><div class="t" style="font-size:9.6px;color:#fff;left:17.90px;top:54.00px;transform:scaleX(1.024);transform-origin:0 0;">Indri Djon Hansemit</div></div>
<div class="a" style="left:878.00px;top:41.00px;width:32.50px;height:67.70px;background:#1b1613;"></div>
<div class="a" style="left:882.60px;top:63.60px;width:23.00px;height:23.00px;background:#0e72ed;border-radius:50%;border:1.6px solid #fff;"></div>
<svg style="left:890.50px;top:70.00px;" width="7" height="10" viewBox="0 0 7 10" ><path d="M1.5 1 L5.5 5 L1.5 9" fill="none" stroke="#fff" stroke-width="1.5"/></svg>
<div class="a" style="left:497.00px;top:114.50px;width:30.00px;height:3.50px;background:#777;border-radius:1px;"></div>
</div>
<div class="a" style="left:152.00px;top:121.80px;width:720.00px;height:1.40px;background:#0a0c0e;"></div>
<div id="ppt">
<div class="a" style="left:0.00px;top:0.00px;width:720.00px;height:45.00px;background:linear-gradient(90deg,#e9e9e9 0%,#e6ebec 40%,#e2eef0 100%);"></div>
<svg style="left:8.60px;top:9.20px;" width="10" height="10" viewBox="0 0 10 10" ><circle cx="5.4" cy="5" r="4.6" fill="#d35230"/><path d="M5.4 .4 A4.6 4.6 0 0 1 10 5 H5.4z" fill="#ff8f6b"/><rect x="0" y="2.2" width="5.6" height="5.6" rx=".8" fill="#c43e1c"/></svg>
<div class="t" style="font-size:5px;font-weight:bold;color:#fff;left:9.73px;top:12.00px;">P</div>
<div class="t" style="font-size:6.2px;color:#333;left:26.70px;top:11.00px;transform:scaleX(0.922);transform-origin:0 0;">AutoSave</div>
<div class="a" style="left:55.00px;top:8.40px;width:25.00px;height:11.00px;background:#c43e1c;border-radius:5.5px;"></div>
<div class="t" style="font-size:6px;font-weight:bold;color:#fff;left:58.90px;top:11.00px;transform:scaleX(0.960);transform-origin:0 0;">On</div>
<div class="a" style="left:70.30px;top:10.00px;width:8.00px;height:8.00px;background:#fff;border-radius:50%;"></div>
<svg style="left:86.00px;top:9.70px;" width="10" height="9" viewBox="0 0 10 9" ><path d="M.5 1.5 a1 1 0 0 1 1 -1 H7.5 L9.5 2.5 V7.5 a1 1 0 0 1 -1 1 H1.5 a1 1 0 0 1 -1 -1z M2.5 .5 V3 H6.8 V.5 M2.2 8.5 V5.2 H5" fill="none" stroke="#555" stroke-width=".8"/><circle cx="7.4" cy="6.8" r="2.3" fill="#2ea44f"/><path d="M6.3 6.8 a1.1 1.1 0 0 1 2 -.6 M8.5 6.8 a1.1 1.1 0 0 1 -2 .6" stroke="#fff" stroke-width=".5" fill="none"/></svg>
<svg style="left:102.80px;top:9.30px;" width="9" height="10" viewBox="0 0 9 10" ><path d="M.8 1 V4.4 H4.2" fill="none" stroke="#333" stroke-width=".9"/><path d="M1 4.2 C2.4 1.6 5.4 .8 7.2 2.4 C9 4.2 7.6 7 3.4 9.6" fill="none" stroke="#333" stroke-width=".9"/></svg>
<svg style="left:114.80px;top:13.55px;" width="3.0" height="1.5" viewBox="0 0 3.0 1.5" ><path d="M0 0 L1.5 1.5 L3.0 0" fill="none" stroke="#333" stroke-width="0.8"/></svg>
<svg style="left:124.00px;top:9.50px;" width="9.5" height="10" viewBox="0 0 9.5 10" ><path d="M8.6 1 V4.2 H5.4" fill="none" stroke="#b5b5b5" stroke-width=".8"/><path d="M8.4 4 C7.4 1.6 3.8 1 2 3 C0 5.4 1.4 8.6 4.8 9.2 C7 9.4 8.6 7.6 8.8 6" fill="none" stroke="#b5b5b5" stroke-width=".8"/></svg>
<svg style="left:140.00px;top:8.80px;" width="10" height="11" viewBox="0 0 10 11" ><rect x=".5" y=".8" width="9" height="6" fill="none" stroke="#444" stroke-width=".8"/><path d="M5 6.8 V10 M2.6 10.2 H7.4" stroke="#444" stroke-width=".8"/><path d="M3.8 5.2 C3.8 3.8 6.2 3.8 6.2 5.2z" fill="#2ea44f"/><circle cx="5" cy="2.8" r=".9" fill="#2ea44f"/></svg>
<svg style="left:159.00px;top:12.60px;" width="4" height="4" viewBox="0 0 4 4" ><path d="M.2 .3 H3.8 M.4 1.6 L2 3.2 L3.6 1.6" fill="none" stroke="#555" stroke-width=".7"/></svg>
<div class="t" style="font-size:6.8px;color:#333;left:177.50px;top:11.00px;transform:scaleX(0.961);transform-origin:0 0;">UNIB GWR iin • Saved</div>
<svg style="left:247.80px;top:13.30px;" width="3.6" height="1.8" viewBox="0 0 3.6 1.8" ><path d="M0 0 L1.8 1.8 L3.6 0" fill="none" stroke="#333" stroke-width="0.8"/></svg>
<div class="a" style="left:279.80px;top:5.00px;width:193.20px;height:18.00px;background:#f5f7f8;border-radius:3px;border:.6px solid #dfe3e4;box-shadow:0 .5px 0 #cfd3d4;"></div>
<svg style="left:288.00px;top:10.00px;" width="7" height="8" viewBox="0 0 7 8" ><circle cx="4.2" cy="3" r="2.5" fill="none" stroke="#444" stroke-width=".7"/><path d="M2.4 4.8 L.4 7.4" stroke="#444" stroke-width=".7"/></svg>
<div class="t" style="font-size:6.9px;color:#444;left:302.50px;top:11.00px;transform:scaleX(0.993);transform-origin:0 0;">Search</div>
<div class="a" style="left:618.70px;top:7.20px;width:13.00px;height:13.00px;background:#9c6b0e;border-radius:50%;"></div>
<div class="t" style="font-size:3.6px;color:#e8d9b0;left:624.20px;top:13.00px;">II</div>
<div class="a" style="left:649.20px;top:13.20px;width:6.00px;height:0.80px;background:#3b3b3b;"></div>
<svg style="left:676.30px;top:10.80px;" width="6" height="6" viewBox="0 0 6 6" ><rect x=".4" y="1.4" width="4.2" height="4.2" rx=".8" fill="none" stroke="#333" stroke-width=".8"/><path d="M1.6 1.2 V.9 a.5 .5 0 0 1 .5 -.5 H5 a.6 .6 0 0 1 .6 .6 V3.9 a.5 .5 0 0 1 -.5 .5 H4.8" fill="none" stroke="#333" stroke-width=".8"/></svg>
<svg style="left:703.20px;top:10.80px;" width="6" height="6" viewBox="0 0 6 6" ><path d="M.4 .4 L5.6 5.6 M5.6 .4 L.4 5.6" stroke="#333" stroke-width=".8"/></svg>
<div class="t" style="font-size:7.2px;color:#333;left:12.00px;top:33.00px;transform:scaleX(0.931);transform-origin:0 0;">File</div>
<div class="t" style="font-size:7.2px;color:#333;left:70.30px;top:33.00px;transform:scaleX(0.977);transform-origin:0 0;">Insert</div>
<div class="t" style="font-size:7.2px;color:#333;left:99.80px;top:33.00px;transform:scaleX(1.018);transform-origin:0 0;">Draw</div>
<div class="t" style="font-size:7.2px;color:#333;left:128.00px;top:33.00px;transform:scaleX(0.995);transform-origin:0 0;">Design</div>
<div class="t" style="font-size:7.2px;color:#333;left:162.40px;top:33.00px;">Transitions</div>
<div class="t" style="font-size:7.2px;color:#333;left:208.60px;top:33.00px;transform:scaleX(1.056);transform-origin:0 0;">Animations</div>
<div class="t" style="font-size:7.2px;color:#333;left:258.00px;top:33.00px;">Slide Show</div>
<div class="t" style="font-size:7.2px;color:#333;left:305.80px;top:33.00px;transform:scaleX(0.948);transform-origin:0 0;">Record</div>
<div class="t" style="font-size:7.2px;color:#333;left:339.40px;top:33.00px;transform:scaleX(0.949);transform-origin:0 0;">Review</div>
<div class="t" style="font-size:7.2px;color:#333;left:374.00px;top:33.00px;transform:scaleX(0.956);transform-origin:0 0;">View</div>
<div class="t" style="font-size:7.2px;color:#333;left:400.70px;top:33.00px;transform:scaleX(1.026);transform-origin:0 0;">Help</div>
<div class="t" style="font-size:7.2px;color:#333;left:427.00px;top:33.00px;transform:scaleX(1.074);transform-origin:0 0;">Nitro Pro</div>
<div class="t" style="font-size:7.2px;font-weight:bold;color:#222;left:37.80px;top:33.00px;transform:scaleX(1.025);transform-origin:0 0;">Home</div>
<div class="a" style="left:37.80px;top:41.30px;width:21.00px;height:1.20px;background:#c43e1c;border-radius:.6px;"></div>
<div class="a" style="left:539.80px;top:29.50px;width:37.40px;height:13.00px;background:#fcfdfd;border-radius:2px;border:.6px solid #b9bdbe;"></div>
<svg style="left:543.50px;top:33.20px;" width="6" height="6" viewBox="0 0 6 6" ><circle cx="3" cy="3" r="2.6" fill="none" stroke="#333" stroke-width=".7"/><circle cx="3" cy="3" r="1.3" fill="#333"/></svg>
<div class="t" style="font-size:6.9px;color:#222;left:551.50px;top:34.00px;transform:scaleX(0.967);transform-origin:0 0;">Record</div>
<div class="a" style="left:582.50px;top:29.50px;width:68.70px;height:13.00px;background:#fcfdfd;border-radius:2px;border:.6px solid #b9bdbe;"></div>
<svg style="left:586.50px;top:32.80px;" width="7" height="7" viewBox="0 0 7 7" ><rect x="2.6" y=".8" width="4" height="5" rx=".6" fill="#555"/><rect x=".3" y="1.6" width="4" height="4" rx=".5" fill="#333"/><circle cx="5.6" cy="1" r=".9" fill="#555"/></svg>
<div class="t" style="font-size:6.9px;color:#222;left:595.00px;top:34.00px;">Present in Teams</div>
<div class="a" style="left:656.00px;top:29.50px;width:13.00px;height:13.00px;background:#fcfdfd;border-radius:2px;border:.6px solid #b9bdbe;"></div>
<svg style="left:659.30px;top:33.30px;" width="7" height="6" viewBox="0 0 7 6" ><path d="M.5 .5 H6.5 V4.2 H2.6 L1.4 5.6 V4.2 H.5z" fill="none" stroke="#444" stroke-width=".7"/></svg>
<div class="a" style="left:673.40px;top:29.00px;width:39.60px;height:13.80px;background:#c43e1c;border-radius:2px;"></div>
<svg style="left:677.50px;top:32.80px;" width="7" height="7" viewBox="0 0 7 7" ><path d="M2.6 2.4 H.8 V6.4 H5.6 V4.6" fill="none" stroke="#fff" stroke-width=".7"/><path d="M2.4 4.6 C2.6 2.8 3.8 2 5 2 V.8 L6.8 2.6 L5 4.2 V3.2 C4 3.2 3 3.4 2.4 4.6z" fill="none" stroke="#fff" stroke-width=".6"/></svg>
<div class="t" style="font-size:6.9px;color:#fff;left:686.50px;top:34.00px;transform:scaleX(0.978);transform-origin:0 0;">Share</div>
<svg style="left:707.00px;top:35.65px;" width="2.6" height="1.3" viewBox="0 0 2.6 1.3" ><path d="M0 0 L1.3 1.3 L2.6 0" fill="none" stroke="#fff" stroke-width="0.7"/></svg>
<div class="a" style="left:5.00px;top:44.00px;width:710.00px;height:56.20px;background:#fbfcfc;border-radius:4px;box-shadow:0 .6px 1.2px rgba(0,0,0,.22);"></div>
<svg style="left:16.20px;top:49.20px;" width="17" height="17.5" viewBox="0 0 17 17.5" ><path d="M3.6 2.6 H1.6 a.8 .8 0 0 0 -.8 .8 V15 a.8 .8 0 0 0 .8 .8 H7.5" fill="none" stroke="#e8832a" stroke-width="1.1"/><path d="M9.2 2.6 H11 a.8 .8 0 0 1 .8 .8 V6.5" fill="none" stroke="#e8832a" stroke-width="1.1"/><path d="M3.8 3.6 V2.2 H5 a1.4 1.4 0 0 1 2.8 0 H9 V3.6z" fill="#fff" stroke="#777" stroke-width=".8"/><rect x="7.8" y="7.4" width="8" height="9.4" rx=".6" fill="#fff" stroke="#777" stroke-width=".9"/></svg>
<div class="t" style="font-size:6.6px;color:#222;left:15.80px;top:70.00px;transform:scaleX(0.889);transform-origin:0 0;">Paste</div>
<svg style="left:21.00px;top:80.45px;" width="3.0" height="1.5" viewBox="0 0 3.0 1.5" ><path d="M0 0 L1.5 1.5 L3.0 0" fill="none" stroke="#222" stroke-width="0.8"/></svg>
<svg style="left:39.20px;top:49.80px;" width="6" height="8.5" viewBox="0 0 6 8.5" ><path d="M1.4 .3 L4.4 5.6 M4.6 .3 L1.6 5.6" stroke="#444" stroke-width=".7"/><circle cx="1.3" cy="6.8" r="1.1" fill="none" stroke="#2b7cd3" stroke-width=".7"/><circle cx="4.7" cy="6.8" r="1.1" fill="none" stroke="#2b7cd3" stroke-width=".7"/></svg>
<svg style="left:37.80px;top:63.00px;" width="10" height="10" viewBox="0 0 10 10" ><path d="M2.6 1.6 V.6 H6.2 V7.6 H4" fill="none" stroke="#555" stroke-width=".8"/><path d="M.5 2 H6 a0 0 0 0 1 0 0 M.5 2 V9.4 H7.6 V4 L5.6 2 H.5z" fill="#fff" stroke="#555" stroke-width=".8" transform="translate(2 0)"/></svg>
<svg style="left:54.20px;top:67.25px;" width="3.0" height="1.5" viewBox="0 0 3.0 1.5" ><path d="M0 0 L1.5 1.5 L3.0 0" fill="none" stroke="#222" stroke-width="0.8"/></svg>
<svg style="left:38.30px;top:78.00px;" width="9.5" height="8.5" viewBox="0 0 9.5 8.5" ><path d="M5.6 3 L8.2 .6 L9 1.6 L6.8 4" fill="none" stroke="#555" stroke-width=".8"/><path d="M.6 5.2 L4.6 2.6 L7.2 5.4 L4.4 8 Q2.4 8.2 .6 5.2z" fill="none" stroke="#e8832a" stroke-width=".9"/><path d="M3.4 3.6 L6 6.4" stroke="#e8832a" stroke-width=".7"/></svg>
<div class="t" style="font-size:5.9px;color:#262626;left:19.30px;top:93.00px;transform:scaleX(1.010);transform-origin:0 0;">Clipboard</div>
<svg style="left:60.00px;top:92.80px;" width="4" height="4" viewBox="0 0 4 4" ><path d="M.3 3.7 V.3 H3.7" fill="none" stroke="#777" stroke-width=".6"/><path d="M1.6 1.6 L3.7 3.7 M3.7 2.2 V3.7 H2.2" fill="none" stroke="#777" stroke-width=".6"/></svg>
<div class="a" style="left:66.10px;top:47.30px;width:0.70px;height:49.50px;background:#d6d6d6;"></div>
<svg style="left:73.60px;top:48.40px;" width="18" height="16" viewBox="0 0 18 16" ><rect x="2.4" y="2.6" width="14.6" height="12.6" fill="#fff" stroke="#666" stroke-width=".9"/><path d="M2.4 6.4 H17 M8.2 6.4 V12.4 M2.4 12.4 H17" stroke="#666" stroke-width=".9" fill="none"/><path d="M4.2 0 V8.6 M0 4.3 H8.6" stroke="#2ea44f" stroke-width="1.1"/></svg>
<div class="t" style="font-size:6.6px;color:#222;left:76.80px;top:70.00px;">New</div>
<div class="t" style="font-size:6.6px;color:#222;left:73.00px;top:78.00px;transform:scaleX(0.974);transform-origin:0 0;">Slide</div>
<svg style="left:89.60px;top:80.50px;" width="2.8" height="1.4" viewBox="0 0 2.8 1.4" ><path d="M0 0 L1.4 1.4 L2.8 0" fill="none" stroke="#222" stroke-width="0.8"/></svg>
<svg style="left:97.90px;top:49.40px;" width="9.4" height="7.8" viewBox="0 0 9.4 7.8" ><rect x=".45" y=".45" width="8.5" height="6.9" fill="#fff" stroke="#555" stroke-width=".9"/><path d="M.4 2.2 H9 M4.7 2.2 V7.2" stroke="#555" stroke-width=".8"/></svg>
<svg style="left:111.10px;top:52.80px;" width="2.8" height="1.4" viewBox="0 0 2.8 1.4" ><path d="M0 0 L1.4 1.4 L2.8 0" fill="none" stroke="#222" stroke-width="0.8"/></svg>
<svg style="left:97.90px;top:63.20px;" width="9.4" height="8" viewBox="0 0 9.4 8" ><rect x="1.4" y="1.6" width="7.6" height="6" fill="#fff" stroke="#555" stroke-width=".9"/><path d="M1.4 3.4 H9" stroke="#555" stroke-width=".8"/><path d="M3.6 .6 H1.2 L2.4 -.4 M1.2 .6 L2.4 1.6" stroke="#2b7cd3" stroke-width=".8" fill="none"/><path d="M1 .6 C.2 1.4 .2 2.8 1 3.6" stroke="#2b7cd3" stroke-width=".8" fill="none"/></svg>
<svg style="left:97.90px;top:78.00px;" width="9.4" height="9.4" viewBox="0 0 9.4 9.4" ><rect x=".45" y="2.6" width="8.5" height="6.3" fill="#fff" stroke="#555" stroke-width=".9"/><rect x="0" y="0" width="9.4" height="1.8" fill="#4cae4f"/><rect x="1.8" y="4.2" width="5.8" height="3.2" fill="none" stroke="#555" stroke-width=".7"/></svg>
<svg style="left:111.10px;top:82.30px;" width="2.8" height="1.4" viewBox="0 0 2.8 1.4" ><path d="M0 0 L1.4 1.4 L2.8 0" fill="none" stroke="#222" stroke-width="0.8"/></svg>
<div class="t" style="font-size:5.9px;color:#262626;left:87.00px;top:93.00px;transform:scaleX(0.933);transform-origin:0 0;">Slides</div>
<div class="a" style="left:122.20px;top:47.30px;width:0.70px;height:49.50px;background:#d6d6d6;"></div>
<div class="a" style="left:127.40px;top:47.00px;width:87.90px;height:13.00px;background:#ededed;border-radius:3px;"></div>
<div class="a" style="left:217.10px;top:47.00px;width:25.50px;height:13.00px;background:#ededed;border-radius:3px;"></div>
<svg style="left:210.80px;top:53.10px;" width="2.8" height="1.4" viewBox="0 0 2.8 1.4" ><path d="M0 0 L1.4 1.4 L2.8 0" fill="none" stroke="#999" stroke-width="0.7"/></svg>
<svg style="left:238.00px;top:53.10px;" width="2.8" height="1.4" viewBox="0 0 2.8 1.4" ><path d="M0 0 L1.4 1.4 L2.8 0" fill="none" stroke="#999" stroke-width="0.7"/></svg>
<div class="t" style="font-size:7px;font-weight:bold;color:#8a8a8a;left:132.20px;top:65.00px;transform:scaleX(0.890);transform-origin:0 0;">B</div>
<div class="t" style="font-size:7px;font-style:italic;color:#8a8a8a;left:148.00px;top:65.00px;transform:scaleX(1.028);transform-origin:0 0;">I</div>
<div class="t" style="font-size:6.8px;color:#8a8a8a;left:161.50px;top:65.00px;transform:scaleX(0.937);transform-origin:0 0;text-decoration:underline;">U</div>
<div class="t" style="font-size:7.4px;color:#8a8a8a;left:175.30px;top:65.00px;transform:scaleX(0.952);transform-origin:0 0;">S</div>
<div class="t" style="font-size:6.4px;color:#8a8a8a;left:188.50px;top:65.00px;transform:scaleX(1.152);transform-origin:0 0;text-decoration:line-through;">ab</div>
<div class="t" style="font-size:6.6px;color:#8a8a8a;left:203.00px;top:64.00px;transform:scaleX(1.107);transform-origin:0 0;">AV</div>
<svg style="left:203.40px;top:70.30px;" width="8.6" height="2" viewBox="0 0 8.6 2" ><path d="M1 1 H7.6 M2 .2 L1 1 L2 1.8 M6.6 .2 L7.6 1 L6.6 1.8" fill="none" stroke="#8a8a8a" stroke-width=".5"/></svg>
<svg style="left:215.20px;top:67.50px;" width="2.8" height="1.4" viewBox="0 0 2.8 1.4" ><path d="M0 0 L1.4 1.4 L2.8 0" fill="none" stroke="#999" stroke-width="0.7"/></svg>
<svg style="left:130.00px;top:78.00px;" width="9" height="8.4" viewBox="0 0 9 8.4" ><path d="M2.2 4.6 L6.2 .6 L8 2.4 L4 6.4 L1.8 6.8z" fill="none" stroke="#8a8a8a" stroke-width=".7"/><path d="M0 8 H8.8" stroke="#bdbdbd" stroke-width="1.1"/></svg>
<svg style="left:143.60px;top:82.30px;" width="2.8" height="1.4" viewBox="0 0 2.8 1.4" ><path d="M0 0 L1.4 1.4 L2.8 0" fill="none" stroke="#999" stroke-width="0.7"/></svg>
<div class="t" style="font-size:7.6px;color:#8a8a8a;left:153.60px;top:78.00px;transform:scaleX(1.263);transform-origin:0 0;">A</div>
<div class="a" style="left:153.00px;top:84.60px;width:8.70px;height:1.30px;background:#bdbdbd;"></div>
<svg style="left:166.40px;top:82.30px;" width="2.8" height="1.4" viewBox="0 0 2.8 1.4" ><path d="M0 0 L1.4 1.4 L2.8 0" fill="none" stroke="#999" stroke-width="0.7"/></svg>
<div class="t" style="font-size:6.8px;color:#8a8a8a;left:176.20px;top:80.00px;transform:scaleX(1.118);transform-origin:0 0;">Aa</div>
<svg style="left:187.90px;top:82.30px;" width="2.8" height="1.4" viewBox="0 0 2.8 1.4" ><path d="M0 0 L1.4 1.4 L2.8 0" fill="none" stroke="#999" stroke-width="0.7"/></svg>
<div class="a" style="left:196.60px;top:76.50px;width:0.70px;height:12.00px;background:#d6d6d6;"></div>
<div class="t" style="font-size:8.4px;color:#8a8a8a;left:201.30px;top:78.00px;transform:scaleX(1.107);transform-origin:0 0;">A</div>
<svg style="left:207.60px;top:78.60px;" width="2" height="1.2" viewBox="0 0 2 1.2" ><path d="M0 1.2 L1 .2 L2 1.2" fill="none" stroke="#8a8a8a" stroke-width=".5"/></svg>
<div class="t" style="font-size:7.2px;color:#8a8a8a;left:216.80px;top:79.00px;transform:scaleX(1.083);transform-origin:0 0;">A</div>
<svg style="left:222.30px;top:79.40px;" width="2" height="1.2" viewBox="0 0 2 1.2" ><path d="M0 0 L1 1 L2 0" fill="none" stroke="#8a8a8a" stroke-width=".5"/></svg>
<div class="a" style="left:227.30px;top:76.50px;width:0.70px;height:12.00px;background:#d6d6d6;"></div>
<div class="t" style="font-size:7.8px;color:#8a8a8a;left:231.50px;top:79.00px;transform:scaleX(1.076);transform-origin:0 0;">A</div>
<svg style="left:236.40px;top:81.60px;" width="4.4" height="4.4" viewBox="0 0 4.4 4.4" ><path d="M.4 2.6 L2.4 .4 L4 2 L2 4.2z M1.2 1.8 L2.8 3.4" fill="none" stroke="#8a8a8a" stroke-width=".55"/></svg>
<div class="t" style="font-size:5.9px;color:#262626;left:174.90px;top:93.00px;transform:scaleX(0.923);transform-origin:0 0;">Font</div>
<svg style="left:240.50px;top:92.80px;" width="4" height="4" viewBox="0 0 4 4" ><path d="M.3 3.7 V.3 H3.7" fill="none" stroke="#777" stroke-width=".6"/><path d="M1.6 1.6 L3.7 3.7 M3.7 2.2 V3.7 H2.2" fill="none" stroke="#777" stroke-width=".6"/></svg>
<div class="a" style="left:247.00px;top:47.30px;width:0.70px;height:49.50px;background:#d6d6d6;"></div>
<svg style="left:253.80px;top:49.00px;" width="9" height="8.5" viewBox="0 0 9 8.5" ><path d="M2.4 1 H9 M2.4 4.2 H9 M2.4 7.4 H9" stroke="#8a8a8a" stroke-width=".7"/><rect x="0" y=".5" width="1" height="1" fill="#8a8a8a"/><rect x="0" y="3.7" width="1" height="1" fill="#8a8a8a"/><rect x="0" y="6.9" width="1" height="1" fill="#8a8a8a"/></svg>
<svg style="left:267.60px;top:52.90px;" width="2.8" height="1.4" viewBox="0 0 2.8 1.4" ><path d="M0 0 L1.4 1.4 L2.8 0" fill="none" stroke="#999" stroke-width="0.7"/></svg>
<svg style="left:276.70px;top:49.00px;" width="9" height="8.5" viewBox="0 0 9 8.5" ><path d="M2.4 1 H9 M2.4 4.2 H9 M2.4 7.4 H9" stroke="#8a8a8a" stroke-width=".7"/><rect x="0" y=".5" width="1" height="1" fill="#8a8a8a"/><rect x="0" y="3.7" width="1" height="1" fill="#8a8a8a"/><rect x="0" y="6.9" width="1" height="1" fill="#8a8a8a"/></svg>
<svg style="left:290.20px;top:52.90px;" width="2.8" height="1.4" viewBox="0 0 2.8 1.4" ><path d="M0 0 L1.4 1.4 L2.8 0" fill="none" stroke="#999" stroke-width="0.7"/></svg>
<div class="a" style="left:297.10px;top:47.00px;width:0.70px;height:13.00px;background:#d6d6d6;"></div>
<svg style="left:301.50px;top:49.00px;" width="9.2" height="8.5" viewBox="0 0 9.2 8.5" ><path d="M3.6 1 H9.2 M3.6 4.2 H9.2 M3.6 7.4 H9.2" stroke="#8a8a8a" stroke-width=".7"/><path d="M1.2 .4 V8 M.2 1.6 L1.2 .4 L2.2 1.6 M.2 6.8 L1.2 8 L2.2 6.8" fill="none" stroke="#8a8a8a" stroke-width=".6"/></svg>
<svg style="left:313.60px;top:52.90px;" width="2.8" height="1.4" viewBox="0 0 2.8 1.4" ><path d="M0 0 L1.4 1.4 L2.8 0" fill="none" stroke="#999" stroke-width="0.7"/></svg>
<svg style="left:325.50px;top:48.60px;" width="8" height="9.4" viewBox="0 0 8 9.4" ><path d="M1.6 0 V9 M.2 7.4 L1.6 9 L3 7.4" fill="none" stroke="#8a8a8a" stroke-width=".7"/><path d="M5.8 9.2 V.6 M4.4 2.2 L5.8 .4 L7.2 2.2" fill="none" stroke="#8a8a8a" stroke-width=".7"/><path d="M4.6 5 H7 M4.6 7 H7" stroke="#8a8a8a" stroke-width=".5"/></svg>
<svg style="left:337.00px;top:52.90px;" width="2.8" height="1.4" viewBox="0 0 2.8 1.4" ><path d="M0 0 L1.4 1.4 L2.8 0" fill="none" stroke="#999" stroke-width="0.7"/></svg>
<svg style="left:254.40px;top:63.60px;" width="8.4" height="8" viewBox="0 0 8.4 8" ><path d="M0 .4 H8.4 M4 2.8 H8.4 M4 5.2 H8.4 M0 7.6 H8.4" stroke="#8a8a8a" stroke-width=".7"/><path d="M3 4 H.4 M1.4 3 L.4 4 L1.4 5" fill="none" stroke="#8a8a8a" stroke-width=".6"/></svg>
<svg style="left:268.80px;top:63.60px;" width="8.4" height="8" viewBox="0 0 8.4 8" ><path d="M0 .4 H8.4 M4 2.8 H8.4 M4 5.2 H8.4 M0 7.6 H8.4" stroke="#8a8a8a" stroke-width=".7"/><path d="M.2 4 H2.8 M1.8 3 L2.8 4 L1.8 5" fill="none" stroke="#8a8a8a" stroke-width=".6"/></svg>
<div class="a" style="left:280.40px;top:62.00px;width:0.70px;height:12.00px;background:#d6d6d6;"></div>
<svg style="left:285.50px;top:65.00px;" width="7.5" height="5.4" viewBox="0 0 7.5 5.4" ><path d="M0 .4 H3.2 M0 2.6 H3.2 M0 4.8 H3.2 M4.3 .4 H7.5 M4.3 2.6 H7.5 M4.3 4.8 H7.5" stroke="#aaa" stroke-width=".8"/></svg>
<svg style="left:296.90px;top:67.30px;" width="2.8" height="1.4" viewBox="0 0 2.8 1.4" ><path d="M0 0 L1.4 1.4 L2.8 0" fill="none" stroke="#999" stroke-width="0.7"/></svg>
<svg style="left:325.00px;top:63.40px;" width="8.8" height="8.4" viewBox="0 0 8.8 8.4" ><path d="M2 .4 H.4 V8 H2 M6.8 .4 H8.4 V8 H6.8" fill="none" stroke="#8a8a8a" stroke-width=".7"/><path d="M2 4.2 H6.8 M4.4 1 V2.8 M3.6 2 L4.4 2.8 L5.2 2 M4.4 7.4 V5.6 M3.6 6.4 L4.4 5.6 L5.2 6.4" fill="none" stroke="#8a8a8a" stroke-width=".55"/></svg>
<svg style="left:337.00px;top:67.30px;" width="2.8" height="1.4" viewBox="0 0 2.8 1.4" ><path d="M0 0 L1.4 1.4 L2.8 0" fill="none" stroke="#999" stroke-width="0.7"/></svg>
<svg style="left:254.40px;top:78.40px;" width="8.4" height="9.5" viewBox="0 0 8.4 9.5" ><path d="M0 0.4 H8.4 M0 2.3 H5.6 M0 4.2 H8.4 M0 6.1 H5.6 M0 8.0 H8.4 " stroke="#8a8a8a" stroke-width="0.7" fill="none"/></svg>
<svg style="left:269.00px;top:78.40px;" width="8.4" height="9.5" viewBox="0 0 8.4 9.5" ><path d="M0 0.4 H8.4 M1.4 2.3 H7.0 M0 4.2 H8.4 M1.4 6.1 H7.0 M0 8.0 H8.4 " stroke="#8a8a8a" stroke-width="0.7" fill="none"/></svg>
<svg style="left:283.40px;top:78.40px;" width="8.4" height="9.5" viewBox="0 0 8.4 9.5" ><path d="M0 0.4 H8.4 M2.8 2.3 H8.399999999999999 M0 4.2 H8.4 M2.8 6.1 H8.399999999999999 M0 8.0 H8.4 " stroke="#8a8a8a" stroke-width="0.7" fill="none"/></svg>
<svg style="left:298.00px;top:78.40px;" width="8.4" height="9.5" viewBox="0 0 8.4 9.5" ><path d="M0 0.4 H8.4 M0 2.3 H8.4 M0 4.2 H8.4 M0 6.1 H8.4 M0 8.0 H8.4 " stroke="#8a8a8a" stroke-width="0.7" fill="none"/></svg>
<svg style="left:324.70px;top:78.60px;" width="9.6" height="8" viewBox="0 0 9.6 8" ><path d="M.4 1.6 L3 .4 L8 2.6 L5.4 3.8z" fill="none" stroke="#8a8a8a" stroke-width=".6"/><rect x="3.4" y="4" width="5.8" height="3.6" fill="none" stroke="#8a8a8a" stroke-width=".6"/><path d="M5.2 4 V7.6 M7.2 4 V7.6 M1.6 2.6 V6 H3.4" fill="none" stroke="#8a8a8a" stroke-width=".5"/></svg>
<svg style="left:337.00px;top:82.30px;" width="2.8" height="1.4" viewBox="0 0 2.8 1.4" ><path d="M0 0 L1.4 1.4 L2.8 0" fill="none" stroke="#999" stroke-width="0.7"/></svg>
<div class="t" style="font-size:5.9px;color:#262626;left:279.80px;top:93.00px;transform:scaleX(0.976);transform-origin:0 0;">Paragraph</div>
<svg style="left:343.00px;top:92.80px;" width="4" height="4" viewBox="0 0 4 4" ><path d="M.3 3.7 V.3 H3.7" fill="none" stroke="#777" stroke-width=".6"/><path d="M1.6 1.6 L3.7 3.7 M3.7 2.2 V3.7 H2.2" fill="none" stroke="#777" stroke-width=".6"/></svg>
<div class="a" style="left:348.60px;top:47.30px;width:0.70px;height:49.50px;background:#d6d6d6;"></div>
<svg style="left:357.80px;top:49.20px;" width="17" height="16" viewBox="0 0 17 16" ><rect x=".4" y=".4" width="11" height="9.6" fill="#5b9ee0" stroke="#2b7cd3" stroke-width=".8"/><circle cx="10.6" cy="10" r="5" fill="#fcfcfc" stroke="#444" stroke-width=".9"/></svg>
<div class="t" style="font-size:6.6px;color:#222;left:355.60px;top:69.00px;transform:scaleX(0.943);transform-origin:0 0;">Shapes</div>
<svg style="left:363.90px;top:80.05px;" width="3.0" height="1.5" viewBox="0 0 3.0 1.5" ><path d="M0 0 L1.5 1.5 L3.0 0" fill="none" stroke="#222" stroke-width="0.8"/></svg>
<svg style="left:384.50px;top:49.20px;" width="16.5" height="15.5" viewBox="0 0 16.5 15.5" ><rect x="3.2" y="2.8" width="10" height="9.6" fill="#f7c982" stroke="#e8962e" stroke-width=".9"/><rect x=".5" y=".5" width="5.4" height="5.2" fill="#fff" stroke="#444" stroke-width=".9"/><rect x="10.4" y="9.4" width="5.4" height="5.2" fill="#fff" stroke="#444" stroke-width=".9"/></svg>
<div class="t" style="font-size:6.6px;color:#222;left:381.40px;top:69.00px;transform:scaleX(0.984);transform-origin:0 0;">Arrange</div>
<svg style="left:390.80px;top:80.05px;" width="3.0" height="1.5" viewBox="0 0 3.0 1.5" ><path d="M0 0 L1.5 1.5 L3.0 0" fill="none" stroke="#222" stroke-width="0.8"/></svg>
<svg style="left:412.30px;top:49.40px;" width="17" height="16" viewBox="0 0 17 16" ><rect x=".4" y=".4" width="14.6" height="14" fill="#f1f1f1" stroke="#bdbdbd" stroke-width=".8"/><path d="M8 13.2 L15.4 5.4 L16.6 6.6 L9.4 14.4 L7.4 15z" fill="#d9d9d9" stroke="#b0b0b0" stroke-width=".6"/></svg>
<div class="t" style="font-size:6.6px;color:#b0b0b0;left:411.90px;top:69.00px;transform:scaleX(0.972);transform-origin:0 0;">Quick</div>
<div class="t" style="font-size:6.6px;color:#b0b0b0;left:408.80px;top:78.00px;transform:scaleX(0.957);transform-origin:0 0;">Styles</div>
<svg style="left:428.10px;top:80.60px;" width="2.8" height="1.4" viewBox="0 0 2.8 1.4" ><path d="M0 0 L1.4 1.4 L2.8 0" fill="none" stroke="#b5b5b5" stroke-width="0.7"/></svg>
<svg style="left:437.00px;top:49.60px;" width="9.4" height="8" viewBox="0 0 9.4 8" ><path d="M4.6 .4 L8 3.6 L4.6 5.6 L1.6 3.4z" fill="none" stroke="#999" stroke-width=".7"/><path d="M.4 7.4 H9" stroke="#c4c4c4" stroke-width="1.1"/></svg>
<svg style="left:437.00px;top:63.60px;" width="9.4" height="8.4" viewBox="0 0 9.4 8.4" ><path d="M1 .8 H5 M1 .8 V5.6 H6.4 V4" fill="none" stroke="#aaa" stroke-width=".7"/><path d="M3.4 4.4 L7.4 .4 L8.6 1.6 L4.6 5.6 L3 6z" fill="none" stroke="#999" stroke-width=".6"/><path d="M.4 7.8 H9" stroke="#c4c4c4" stroke-width="1.1"/></svg>
<svg style="left:437.40px;top:79.00px;" width="8.6" height="7" viewBox="0 0 8.6 7" ><path d="M.6 4.4 L2.4 .6 H8 L6.2 4.4z M.6 4.4 V5.8 H6.2 V4.4 M6.2 5.8 L8 2 V.6" fill="none" stroke="#777" stroke-width=".7"/></svg>
<svg style="left:452.90px;top:52.60px;" width="2.8" height="1.4" viewBox="0 0 2.8 1.4" ><path d="M0 0 L1.4 1.4 L2.8 0" fill="none" stroke="#aaa" stroke-width="0.7"/></svg>
<svg style="left:452.90px;top:67.10px;" width="2.8" height="1.4" viewBox="0 0 2.8 1.4" ><path d="M0 0 L1.4 1.4 L2.8 0" fill="none" stroke="#aaa" stroke-width="0.7"/></svg>
<svg style="left:452.90px;top:81.70px;" width="2.8" height="1.4" viewBox="0 0 2.8 1.4" ><path d="M0 0 L1.4 1.4 L2.8 0" fill="none" stroke="#aaa" stroke-width="0.7"/></svg>
<div class="t" style="font-size:5.9px;color:#262626;left:391.40px;top:93.00px;transform:scaleX(1.026);transform-origin:0 0;">Drawing</div>
<svg style="left:459.00px;top:92.80px;" width="4" height="4" viewBox="0 0 4 4" ><path d="M.3 3.7 V.3 H3.7" fill="none" stroke="#777" stroke-width=".6"/><path d="M1.6 1.6 L3.7 3.7 M3.7 2.2 V3.7 H2.2" fill="none" stroke="#777" stroke-width=".6"/></svg>
<div class="a" style="left:465.10px;top:47.30px;width:0.70px;height:49.50px;background:#d6d6d6;"></div>
<svg style="left:472.80px;top:48.20px;" width="16.4" height="16.6" viewBox="0 0 16.4 16.6" ><circle cx="10.2" cy="6" r="5.4" fill="none" stroke="#444" stroke-width=".9"/><path d="M6.2 10 L.6 16" stroke="#444" stroke-width="1"/></svg>
<div class="t" style="font-size:6.6px;color:#222;left:470.90px;top:69.00px;transform:scaleX(0.986);transform-origin:0 0;">Editing</div>
<svg style="left:478.70px;top:78.65px;" width="3.0" height="1.5" viewBox="0 0 3.0 1.5" ><path d="M0 0 L1.5 1.5 L3.0 0" fill="none" stroke="#222" stroke-width="0.8"/></svg>
<div class="a" style="left:495.60px;top:47.30px;width:0.70px;height:49.50px;background:#d6d6d6;"></div>
<svg style="left:507.60px;top:48.20px;" width="10" height="17.6" viewBox="0 0 10 17.6" ><rect x="2.2" y=".4" width="5.6" height="10.6" rx="2.8" fill="#6cb0ea" stroke="#2b7cd3" stroke-width=".8"/><path d="M.5 8 v.6 a4.5 4.5 0 0 0 9 0 V8" fill="none" stroke="#444" stroke-width=".8"/><path d="M5 13.2 V17" stroke="#444" stroke-width=".8"/></svg>
<div class="t" style="font-size:6.6px;color:#222;left:503.00px;top:70.00px;transform:scaleX(0.954);transform-origin:0 0;">Dictate</div>
<svg style="left:510.80px;top:80.25px;" width="3.0" height="1.5" viewBox="0 0 3.0 1.5" ><path d="M0 0 L1.5 1.5 L3.0 0" fill="none" stroke="#222" stroke-width="0.8"/></svg>
<div class="t" style="font-size:5.9px;color:#262626;left:505.00px;top:93.00px;transform:scaleX(0.970);transform-origin:0 0;">Voice</div>
<div class="a" style="left:528.60px;top:47.30px;width:0.70px;height:49.50px;background:#d6d6d6;"></div>
<svg style="left:543.00px;top:48.20px;" width="16" height="16.5" viewBox="0 0 16 16.5" ><path d="M.6 3.4 H8 L11 6.4 V16 H.6z" fill="#efefef" stroke="#c6c6c6" stroke-width=".7"/><g transform="rotate(-38 10 4)"><rect x="6.6" y="1.4" width="8" height="4.6" rx=".8" fill="#f3f3f3" stroke="#c0c0c0" stroke-width=".7"/><rect x="3.6" y="5" width="6.4" height="4" rx=".8" fill="#f3f3f3" stroke="#c0c0c0" stroke-width=".7" transform="rotate(90 6.8 7)"/></g></svg>
<div class="t" style="font-size:6.6px;color:#b5b5b5;left:535.20px;top:69.00px;transform:scaleX(0.986);transform-origin:0 0;">Sensitivity</div>
<svg style="left:547.90px;top:80.10px;" width="2.8" height="1.4" viewBox="0 0 2.8 1.4" ><path d="M0 0 L1.4 1.4 L2.8 0" fill="none" stroke="#b5b5b5" stroke-width="0.7"/></svg>
<div class="t" style="font-size:5.9px;color:#262626;left:536.00px;top:93.00px;">Sensitivity</div>
<svg style="left:542.60px;top:89.60px;" width="6" height="10.4" viewBox="0 0 6 10.4" ><path d="M.5 .5 L.5 8 L2.3 6.4 L3.5 9.4 L4.7 8.9 L3.5 6 L5.8 6z" fill="#fff" stroke="#222" stroke-width=".6"/></svg>
<div class="a" style="left:570.50px;top:47.30px;width:0.70px;height:49.50px;background:#d6d6d6;"></div>
<svg style="left:580.20px;top:49.40px;" width="16" height="15.2" viewBox="0 0 16 15.2" ><rect x=".6" y=".6" width="14.8" height="14" fill="none" stroke="#d8542a" stroke-width="1.1"/><rect x="2.8" y="2.8" width="4.2" height="4" fill="none" stroke="#d8542a" stroke-width=".9"/><rect x="9" y="2.8" width="4.2" height="4" fill="none" stroke="#d8542a" stroke-width=".9"/><rect x="2.8" y="8.6" width="4.2" height="4" fill="none" stroke="#d8542a" stroke-width=".9"/><rect x="9" y="8.6" width="4.2" height="4" fill="none" stroke="#d8542a" stroke-width=".9"/></svg>
<div class="t" style="font-size:6.6px;color:#222;left:576.60px;top:69.00px;transform:scaleX(1.046);transform-origin:0 0;">Add-ins</div>
<div class="t" style="font-size:5.9px;color:#262626;left:577.60px;top:93.00px;">Add-ins</div>
<div class="a" style="left:606.20px;top:47.30px;width:0.70px;height:49.50px;background:#d6d6d6;"></div>
<svg style="left:615.70px;top:48.20px;" width="18" height="15.5" viewBox="0 0 18 15.5" ><rect x="3" y="3.6" width="14.2" height="11" fill="#fff" stroke="#666" stroke-width="1"/><path d="M3 6.4 H17.2 M13.2 6.4 V11.8 M3 11.8 H17.2" stroke="#666" stroke-width=".9" fill="none"/><path d="M4.6 0 L1.2 6 H3.6 L2 10.4 L6.8 4 H4.4 L6.4 0z" fill="#f5a623" stroke="#e8832a" stroke-width=".4"/></svg>
<div class="t" style="font-size:6.6px;color:#222;left:612.20px;top:69.00px;transform:scaleX(0.984);transform-origin:0 0;">Designer</div>
<svg style="left:645.00px;top:48.60px;" width="17" height="16" viewBox="0 0 17 16" ><path d="M6 1.4 C7 .4 9.6 .4 10.6 2.2 L12.4 6 L8.4 8 L6.8 4.2 C6.4 3 5.4 2.6 6 1.4z" fill="#2aa5e8"/><path d="M10.6 2.2 C12 1.4 15.6 3 16.2 6.4 C16.6 8.6 14.8 9.4 13.6 9 L12.4 6z" fill="#7b5cf0"/><path d="M13.6 9 C15.4 9.6 14 13.6 11.6 14.4 C9.6 15 8.4 14 8 12.4 L9 8.4 L12.4 6z" fill="#e8509a"/><path d="M8 12.4 C8.4 14 6.6 15.4 4.4 14.6 C1.6 13.4 .4 10 1.4 8 L4.4 7 L9 8.4z" fill="#f0a020"/><path d="M1.4 8 C.4 5.4 2.4 1.6 6 1.4 C5.4 2.6 6.4 3 6.8 4.2 L8.4 8 L4.4 7z" fill="#2cb67d"/><path d="M6.6 5.6 L10.4 5 L10.8 10.4 L6.8 11z" fill="#fbfcfc"/></svg>
<div class="t" style="font-size:6.6px;color:#222;left:642.70px;top:69.00px;transform:scaleX(1.061);transform-origin:0 0;">Copilot</div>
<div class="a" style="left:669.70px;top:47.30px;width:0.70px;height:49.50px;background:#d6d6d6;"></div>
<svg style="left:705.00px;top:91.80px;" width="4" height="2" viewBox="0 0 4 2" ><path d="M0 0 L2 2 L4 0" fill="none" stroke="#444" stroke-width="0.8"/></svg>
<div class="a" style="left:0.00px;top:101.50px;width:720.00px;height:264.00px;background:#e6e6e6;"></div>
<div class="a" style="left:0.00px;top:101.50px;width:116.00px;height:264.00px;background:#e9e8e7;"></div>
<div class="a" style="left:106.00px;top:101.50px;width:9.50px;height:263.50px;background:#f1f0ef;"></div>
<svg style="left:107.60px;top:103.80px;" width="5" height="3.4" viewBox="0 0 5 3.4" ><path d="M0 3.4 L2.5 0 L5 3.4z" fill="#666"/></svg>
<svg style="left:107.60px;top:359.00px;" width="5" height="3.4" viewBox="0 0 5 3.4" ><path d="M0 0 L2.5 3.4 L5 0z" fill="#666"/></svg>
<div class="a" style="left:108.20px;top:171.70px;width:3.80px;height:49.50px;background:#6a6a6a;border-radius:2px;"></div>
<div class="t" style="font-size:8.6px;color:#555;left:7.40px;top:105.00px;transform:scaleX(0.836);transform-origin:0 0;">7</div>
<div class="t" style="font-size:8.6px;color:#555;left:7.20px;top:158.00px;transform:scaleX(0.878);transform-origin:0 0;">8</div>
<div class="t" style="font-size:8.6px;color:#c8553d;left:7.00px;top:212.00px;transform:scaleX(0.920);transform-origin:0 0;">9</div>
<div class="t" style="font-size:8.6px;color:#555;left:2.80px;top:266.00px;transform:scaleX(0.962);transform-origin:0 0;">10</div>
<div class="t" style="font-size:8.6px;color:#555;left:2.80px;top:320.00px;transform:scaleX(0.941);transform-origin:0 0;">11</div>
<svg style="left:5.40px;top:329.60px;" width="6" height="6" viewBox="0 0 6 6" ><path d="M3 .2 L3.8 2.2 L5.9 2.3 L4.2 3.6 L4.8 5.7 L3 4.5 L1.2 5.7 L1.8 3.6 L.1 2.3 L2.2 2.2z" fill="#666"/></svg>
<div class="a" style="left:20.30px;top:106.40px;width:74.00px;height:42.00px;background:#fff;border-radius:2px;"></div>
<div class="a" style="left:28.00px;top:107.70px;width:63.20px;height:4.70px;background:#ed7d31;"></div>
<div class="t" style="font-size:2.9px;color:#5a2a00;left:29.00px;top:109.00px;transform:scaleX(1.043);transform-origin:0 0;">Konsep Geographically Weighted Regression</div>
<div class="a" style="left:36.60px;top:114.80px;width:12.40px;height:3.00px;background:#4e8f2f;border-radius:.6px;"></div>
<div class="a" style="left:22.80px;top:121.80px;width:15.00px;height:3.20px;background:#4e8f2f;border-radius:.6px;"></div>
<div class="a" style="left:46.80px;top:121.00px;width:29.60px;height:5.00px;background:#4e8f2f;border-radius:.6px;"></div>
<div class="a" style="left:23.60px;top:130.00px;width:14.40px;height:3.00px;background:#4e8f2f;border-radius:.6px;"></div>
<div class="a" style="left:55.60px;top:130.00px;width:14.40px;height:3.00px;background:#4e8f2f;border-radius:.6px;"></div>
<div class="a" style="left:30.00px;top:139.40px;width:34.60px;height:4.60px;background:#4e8f2f;border-radius:.6px;"></div>
<svg style="left:20.30px;top:106.40px;" width="74" height="42" viewBox="0 0 74 42" ><path d="M22.5 11.4 V15 M17.5 17 H26.5 M10.5 18.6 V23.6 M31 20.6 V23.6 M12 26.6 L19 33 M40 26.6 L30 33" stroke="#4e8f2f" stroke-width=".8" fill="none"/></svg>
<div class="a" style="left:73.40px;top:127.00px;width:17.60px;height:8.60px;background:#2e7fc8;border-radius:1.2px;"></div>
<div class="a" style="left:71.60px;top:137.60px;width:18.40px;height:9.00px;background:#2e7fc8;border-radius:1.2px;"></div>
<svg style="left:69.00px;top:131.00px;" width="5" height="4" viewBox="0 0 5 4" ><path d="M5 0 L0 2 L5 3z" fill="#2e7fc8"/></svg>
<svg style="left:66.60px;top:141.00px;" width="5" height="4" viewBox="0 0 5 4" ><path d="M5 0 L0 2.4 L5 3z" fill="#2e7fc8"/></svg>
<div class="a" style="left:76.00px;top:129.00px;width:12.00px;height:0.50px;background:#cfe3f5;"></div>
<div class="a" style="left:74.00px;top:139.60px;width:12.00px;height:0.50px;background:#cfe3f5;"></div>
<div class="a" style="left:76.00px;top:130.90px;width:12.00px;height:0.50px;background:#cfe3f5;"></div>
<div class="a" style="left:74.00px;top:141.50px;width:12.00px;height:0.50px;background:#cfe3f5;"></div>
<div class="a" style="left:76.00px;top:132.80px;width:12.00px;height:0.50px;background:#cfe3f5;"></div>
<div class="a" style="left:74.00px;top:143.40px;width:12.00px;height:0.50px;background:#cfe3f5;"></div>
<div class="a" style="left:20.30px;top:160.70px;width:74.00px;height:41.30px;background:#fff;border-radius:2px;overflow:hidden;"><svg style="left:0;top:0" width="74" height="41.3" viewBox="0 0 74 41.3"><rect x="54" y="0" width="20" height="41.3" fill="#c9ccc6"/><path d="M56 14 H74 V41.3 H50z" fill="#b9bdb4"/><path d="M58 20 h4 v4 h-4z M64 26 h5 v5 h-5z M60 32 h4 v4 h-4z M67 16 h4 v5 h-4z" fill="#e4e4dc"/><path d="M62 0 H74 V12 L60 18z" fill="#d5dbe2"/><path d="M29 0 H62 L50 41.3 H17z" fill="#ed7d31"/><path d="M56 12 L57.2 12 L51.4 32 L50.2 32z" fill="#f2a21c"/><path d="M0 15.5 L2.2 15 L.6 22 L0 22z" fill="#b5e61d"/></svg></div>
<div class="t" style="font-size:3.3px;font-weight:bold;color:#fff;left:47.00px;top:180.00px;transform:scaleX(0.929);transform-origin:0 0;">3. Model GWR</div>
<div class="a" style="left:18.40px;top:212.60px;width:77.80px;height:45.00px;background:#fff;border-radius:3.4px;border:1.9px solid #7f1717;"></div>
<div class="a" style="left:27.60px;top:215.70px;width:63.60px;height:4.40px;background:#ed7d31;"></div>
<div class="t" style="font-size:4px;color:#2a1a10;left:28.40px;top:217.00px;transform:scaleX(0.965);transform-origin:0 0;">Model Regresi Linier</div>
<div class="a" style="left:26.60px;top:224.30px;width:1.00px;height:0.50px;background:#555;"></div>
<div class="a" style="left:28.40px;top:224.10px;width:61.00px;height:0.50px;background:#a9a9a9;"></div>
<div class="a" style="left:28.40px;top:225.50px;width:22.00px;height:0.50px;background:#b5b5b5;"></div>
<div class="t" style="font-size:3px;font-style:italic;font-family:'Liberation Serif',serif;color:#555;left:28.60px;top:228.00px;transform:scaleX(0.853);transform-origin:0 0;">y = β + Σ βx + ε</div>
<div class="a" style="left:28.20px;top:233.30px;width:61.00px;height:0.60px;background:#8c8c8c;"></div>
<div class="a" style="left:28.20px;top:234.70px;width:4.00px;height:0.50px;background:#8c8c8c;"></div>
<div class="t" style="font-size:3.2px;font-weight:bold;font-family:'Liberation Serif',serif;color:#333;left:28.40px;top:238.00px;transform:scaleX(0.700);transform-origin:0 0;">β = (XX) Xy</div>
<div class="a" style="left:28.20px;top:241.70px;width:61.00px;height:0.70px;background:#555;"></div>
<div class="a" style="left:28.20px;top:243.10px;width:53.00px;height:0.60px;background:#6a6a6a;"></div>
<div class="a" style="left:26.60px;top:244.70px;width:1.00px;height:0.50px;background:#555;"></div>
<div class="a" style="left:28.40px;top:244.70px;width:5.00px;height:0.50px;background:#999;"></div>
<div class="a" style="left:29.80px;top:246.40px;width:46.00px;height:0.55px;background:#888;"></div>
<div class="a" style="left:29.80px;top:248.10px;width:38.00px;height:0.70px;background:#e8141c;"></div>
<div class="a" style="left:29.80px;top:249.90px;width:31.00px;height:0.55px;background:#777;"></div>
<div class="a" style="left:29.80px;top:251.60px;width:18.00px;height:0.55px;background:#888;"></div>
<div class="a" style="left:29.80px;top:253.30px;width:42.00px;height:0.55px;background:#777;"></div>
<div class="a" style="left:20.30px;top:268.60px;width:74.00px;height:41.60px;background:#fff;border-radius:2px;overflow:hidden;"><div class="a" style="left:0;top:36.7px;width:67.6px;height:5px;background:#1f3f9a"></div><div class="a" style="left:67.6px;top:36.7px;width:1.4px;height:5px;background:#b5e61d"></div><div class="a" style="left:6.6px;top:6.4px;width:60px;height:29px;background:#f3f3f3"></div></div>
<div class="a" style="left:25.60px;top:269.80px;width:50.40px;height:4.00px;background:#ed7d31;"></div>
<div class="t" style="font-size:3.6px;color:#2a1a10;left:27.60px;top:271.00px;transform:scaleX(0.966);transform-origin:0 0;">Uji Breusch-Pagan</div>
<svg style="left:76.60px;top:269.00px;" width="18" height="4" viewBox="0 0 18 4" ><path d="M0 2 H13" stroke="#d8d8d8" stroke-width=".6"/><circle cx="15.6" cy="2" r="1.4" fill="#f0b429"/></svg>
<div class="a" style="left:28.00px;top:276.80px;width:30.00px;height:0.55px;background:#bbb;"></div>
<div class="a" style="left:28.00px;top:280.40px;width:6.00px;height:0.55px;background:#e07070;"></div>
<div class="a" style="left:28.00px;top:283.60px;width:17.00px;height:0.55px;background:#b0b0b0;"></div>
<div class="a" style="left:52.00px;top:283.60px;width:22.00px;height:0.55px;background:#d0a0a0;"></div>
<div class="a" style="left:28.00px;top:286.80px;width:21.00px;height:0.55px;background:#b0b0b0;"></div>
<div class="a" style="left:51.00px;top:286.80px;width:11.00px;height:0.55px;background:#bbb;"></div>
<div class="a" style="left:28.00px;top:289.60px;width:5.00px;height:0.55px;background:#a8a8a8;"></div>
<div class="a" style="left:28.00px;top:292.40px;width:20.00px;height:0.55px;background:#a8a8a8;"></div>
<div class="a" style="left:54.00px;top:292.40px;width:20.00px;height:0.55px;background:#d0b0b0;"></div>
<div class="a" style="left:77.00px;top:292.40px;width:6.00px;height:0.55px;background:#b0b0b0;"></div>
<div class="a" style="left:28.00px;top:295.60px;width:3.00px;height:0.55px;background:#a8a8a8;"></div>
<div class="a" style="left:34.00px;top:296.80px;width:24.00px;height:0.55px;background:#c8c8c8;"></div>
<div class="a" style="left:28.00px;top:298.60px;width:58.00px;height:0.55px;background:#d8c0c0;"></div>
<div class="a" style="left:28.00px;top:300.60px;width:4.00px;height:0.55px;background:#a8a8a8;"></div>
<div class="a" style="left:28.00px;top:303.00px;width:13.00px;height:0.55px;background:#b0b0b0;"></div>
<div class="a" style="left:20.30px;top:322.60px;width:74.00px;height:41.20px;background:#fff;border-radius:2px;"></div>
<div class="a" style="left:28.00px;top:323.20px;width:63.20px;height:4.60px;background:#ed7d31;"></div>
<div class="t" style="font-size:2.6px;color:#5a2a00;left:29.60px;top:325.00px;transform:scaleX(0.706);transform-origin:0 0;">Konsep Geographically Weighted Regression</div>
<div class="a" style="left:21.40px;top:331.20px;width:29.60px;height:0.70px;background:#9db7dd;"></div>
<div class="a" style="left:53.00px;top:331.20px;width:37.60px;height:0.70px;background:#9db7dd;"></div>
<div class="t" style="font-size:2.5px;font-weight:bold;color:#334;left:26.60px;top:331.00px;transform:scaleX(0.581);transform-origin:0 0;">Pemodelan Regresi Global</div>
<div class="t" style="font-size:2.5px;font-weight:bold;color:#334;left:65.60px;top:331.00px;transform:scaleX(0.576);transform-origin:0 0;">Pemodelan GWR</div>
<div class="a" style="left:22.00px;top:334.80px;width:28.60px;height:27.60px;border:.6px solid #f0a868;border-radius:1.2px;"></div>
<div class="a" style="left:53.00px;top:334.80px;width:37.60px;height:27.60px;border:.6px solid #f0a868;border-radius:1.2px;"></div>
<div class="a" style="left:24.60px;top:337.40px;width:22.00px;height:0.50px;background:#bbb;"></div>
<div class="a" style="left:24.60px;top:339.05px;width:23.00px;height:0.50px;background:#b0b0b0;"></div>
<div class="a" style="left:24.60px;top:340.70px;width:20.00px;height:0.50px;background:#aaa;"></div>
<div class="a" style="left:24.60px;top:342.35px;width:12.00px;height:0.50px;background:#aaa;"></div>
<div class="a" style="left:24.60px;top:344.00px;width:24.00px;height:0.50px;background:#9a9a9a;"></div>
<div class="a" style="left:24.60px;top:345.65px;width:12.00px;height:0.50px;background:#bbb;"></div>
<div class="a" style="left:24.60px;top:347.30px;width:22.00px;height:0.50px;background:#b0b0b0;"></div>
<div class="a" style="left:24.60px;top:348.95px;width:12.00px;height:0.50px;background:#b0b0b0;"></div>
<div class="a" style="left:24.60px;top:350.60px;width:24.00px;height:0.50px;background:#bbb;"></div>
<div class="a" style="left:24.60px;top:352.25px;width:22.00px;height:0.50px;background:#bbb;"></div>
<div class="a" style="left:24.60px;top:353.90px;width:12.00px;height:0.50px;background:#b0b0b0;"></div>
<div class="a" style="left:24.60px;top:355.55px;width:20.00px;height:0.50px;background:#aaa;"></div>
<div class="a" style="left:24.60px;top:357.20px;width:20.00px;height:0.50px;background:#aaa;"></div>
<div class="a" style="left:24.60px;top:358.85px;width:22.00px;height:0.50px;background:#aaa;"></div>
<div class="a" style="left:55.60px;top:337.40px;width:26.00px;height:0.50px;background:#aaa;"></div>
<div class="a" style="left:55.60px;top:339.05px;width:26.00px;height:0.50px;background:#b0b0b0;"></div>
<div class="a" style="left:55.60px;top:340.70px;width:33.00px;height:0.50px;background:#b0b0b0;"></div>
<div class="a" style="left:55.60px;top:342.35px;width:22.00px;height:0.50px;background:#b0b0b0;"></div>
<div class="a" style="left:55.60px;top:344.00px;width:18.00px;height:0.50px;background:#b0b0b0;"></div>
<div class="a" style="left:55.60px;top:345.65px;width:32.00px;height:0.50px;background:#9a9a9a;"></div>
<div class="a" style="left:55.60px;top:347.30px;width:30.00px;height:0.50px;background:#aaa;"></div>
<div class="a" style="left:55.60px;top:348.95px;width:32.00px;height:0.50px;background:#b0b0b0;"></div>
<div class="a" style="left:55.60px;top:350.60px;width:32.00px;height:0.50px;background:#9a9a9a;"></div>
<div class="a" style="left:55.60px;top:352.25px;width:22.00px;height:0.50px;background:#b0b0b0;"></div>
<div class="a" style="left:55.60px;top:353.90px;width:22.00px;height:0.50px;background:#9a9a9a;"></div>
<div class="a" style="left:55.60px;top:355.55px;width:18.00px;height:0.50px;background:#b0b0b0;"></div>
<div class="a" style="left:55.60px;top:357.20px;width:33.00px;height:0.50px;background:#9a9a9a;"></div>
<div class="a" style="left:204.40px;top:107.60px;width:419.20px;height:235.60px;background:#fff;"></div>
<div class="a" style="left:247.00px;top:115.00px;width:357.20px;height:26.90px;background:#ed7d31;"></div>
<div class="t" style="font-size:20.4px;color:#111;left:249.40px;top:116.00px;transform:scaleX(1.067);transform-origin:0 0;-webkit-text-stroke:.45px #ed7d31;">Model Regresi Linier</div>
<svg style="left:320.60px;top:133.80px;" width="70" height="1.4" viewBox="0 0 70 1.4" ><path d="M0 .9 L0.7 0.2 L2.1 1.2 L3.5 0.2 L4.9 1.2 L6.3 0.2 L7.7 1.2 L9.1 0.2 L10.5 1.2 L11.9 0.2 L13.3 1.2 L14.7 0.2 L16.1 1.2 L17.5 0.2 L18.9 1.2 L20.3 0.2 L21.7 1.2 L23.1 0.2 L24.5 1.2 L25.9 0.2 L27.3 1.2 L28.7 0.2 L30.1 1.2 L31.5 0.2 L32.9 1.2 L34.3 0.2 L35.7 1.2 L37.1 0.2 L38.5 1.2 L39.9 0.2 L41.3 1.2 L42.7 0.2 L44.1 1.2 L45.5 0.2 L46.9 1.2 L48.3 0.2 L49.7 1.2 L51.1 0.2 L52.5 1.2 L53.9 0.2 L55.3 1.2 L56.7 0.2 L58.1 1.2 L59.5 0.2 L60.9 1.2 L62.3 0.2 L63.7 1.2 L65.1 0.2 L66.5 1.2 L67.9 0.2 L69.3 1.2" fill="none" stroke="#e03030" stroke-width=".45"/></svg>
<div class="a" style="left:236.70px;top:163.30px;width:2.70px;height:2.70px;background:#222;"></div>
<div class="t" style="font-size:8.3px;color:#2a2a2a;left:247.60px;top:161.00px;word-spacing:2.985px;transform:scaleX(0.94);transform-origin:0 0;">Metode regresi linier yang merupakan metode yang memodelkan hubungan antara variabel</div>
<div class="t" style="font-size:8.3px;color:#2a2a2a;left:247.60px;top:169.00px;transform:scaleX(0.944);transform-origin:0 0;">respon (y) dan variabel prediktor (X).</div>
<div class="t" style="font-size:12.8px;font-style:italic;font-family:'Liberation Serif',serif;color:#1a1a1a;left:249.60px;top:185.00px;">y</div>
<div class="t" style="font-size:7.2px;font-style:italic;font-family:'Liberation Serif',serif;color:#1a1a1a;left:255.60px;top:193.00px;">i</div>
<div class="t" style="font-size:12.8px;font-family:'Liberation Serif',serif;color:#1a1a1a;left:261.20px;top:185.00px;">=</div>
<div class="t" style="font-size:12.8px;font-style:italic;font-family:'Liberation Serif',serif;color:#1a1a1a;left:271.20px;top:185.00px;">β</div>
<div class="t" style="font-size:7.2px;font-family:'Liberation Serif',serif;color:#1a1a1a;left:279.20px;top:193.00px;">0</div>
<div class="t" style="font-size:12.8px;font-family:'Liberation Serif',serif;color:#1a1a1a;left:284.60px;top:185.00px;">+</div>
<div class="t" style="font-size:25px;font-family:'Liberation Serif',serif;color:#1a1a1a;left:294.20px;top:179.00px;transform:scaleX(0.825);transform-origin:0 0;">Σ</div>
<div class="t" style="font-size:7.2px;font-style:italic;font-family:'Liberation Serif',serif;color:#1a1a1a;left:299.20px;top:178.00px;">p</div>
<div class="t" style="font-size:7.2px;font-style:italic;font-family:'Liberation Serif',serif;color:#1a1a1a;left:294.80px;top:202.00px;transform:scaleX(0.944);transform-origin:0 0;">k=1</div>
<div class="t" style="font-size:12.8px;font-style:italic;font-family:'Liberation Serif',serif;color:#1a1a1a;left:308.60px;top:185.00px;">β</div>
<div class="t" style="font-size:7.2px;font-style:italic;font-family:'Liberation Serif',serif;color:#1a1a1a;left:315.80px;top:193.00px;">k</div>
<div class="t" style="font-size:12.8px;font-style:italic;font-family:'Liberation Serif',serif;color:#1a1a1a;left:320.00px;top:185.00px;">x</div>
<div class="t" style="font-size:7.2px;font-style:italic;font-family:'Liberation Serif',serif;color:#1a1a1a;left:326.20px;top:193.00px;">ik</div>
<div class="t" style="font-size:12.8px;font-family:'Liberation Serif',serif;color:#1a1a1a;left:335.20px;top:185.00px;">+</div>
<div class="t" style="font-size:12.8px;font-style:italic;font-family:'Liberation Serif',serif;color:#1a1a1a;left:344.60px;top:185.00px;">ε</div>
<div class="t" style="font-size:7.2px;font-style:italic;font-family:'Liberation Serif',serif;color:#1a1a1a;left:350.00px;top:193.00px;">i</div>
<div class="t" style="font-size:8.7px;color:#1a1a1a;left:245.00px;top:211.00px;word-spacing:3.200px;transform:scaleX(1);transform-origin:0 0;">Pendugaan parameter regresi (β) seringkali menggunakan: Metode kuadrat terkecil</div>
<div class="t" style="font-size:8.7px;color:#1a1a1a;left:245.00px;top:220.00px;">(OLS).</div>
<div class="t" style="font-size:12px;font-weight:bold;font-family:'Liberation Serif',serif;color:#1a1a1a;left:245.80px;top:235.00px;">β</div>
<div class="t" style="font-size:10px;font-weight:bold;font-family:'Liberation Serif',serif;color:#1a1a1a;left:246.80px;top:233.00px;">ˆ</div>
<div class="t" style="font-size:11px;font-family:'Liberation Serif',serif;color:#1a1a1a;left:254.20px;top:236.00px;">=</div>
<div class="t" style="font-size:16px;font-family:'Liberation Serif',serif;color:#1a1a1a;left:261.40px;top:234.00px;transform:scaleX(.82);transform-origin:0 0;">(</div>
<div class="t" style="font-size:12px;font-weight:bold;font-family:'Liberation Serif',serif;color:#1a1a1a;left:266.80px;top:235.00px;">X</div>
<div class="t" style="font-size:6.6px;font-style:italic;font-family:'Liberation Serif',serif;color:#1a1a1a;left:275.40px;top:235.00px;">T</div>
<div class="t" style="font-size:12px;font-weight:bold;font-family:'Liberation Serif',serif;color:#1a1a1a;left:278.00px;top:235.00px;">X</div>
<div class="t" style="font-size:16px;font-family:'Liberation Serif',serif;color:#1a1a1a;left:286.80px;top:234.00px;transform:scaleX(.82);transform-origin:0 0;">)</div>
<div class="t" style="font-size:6.6px;font-weight:bold;font-family:'Liberation Serif',serif;color:#1a1a1a;left:291.00px;top:233.00px;">−1</div>
<div class="t" style="font-size:12px;font-weight:bold;font-family:'Liberation Serif',serif;color:#1a1a1a;left:299.00px;top:235.00px;">X</div>
<div class="t" style="font-size:6.6px;font-style:italic;font-family:'Liberation Serif',serif;color:#1a1a1a;left:307.60px;top:235.00px;">T</div>
<div class="t" style="font-size:12px;font-weight:bold;font-family:'Liberation Serif',serif;color:#1a1a1a;left:311.00px;top:235.00px;">y</div>
<div class="t" style="font-size:8.7px;color:#1a1a1a;left:245.00px;top:251.00px;word-spacing:0.401px;transform:scaleX(1);transform-origin:0 0;">Metode ini mudah dalam hal perhitungan, namun mempunyai asumsi-asumsi dasar yang</div>
<div class="t" style="font-size:8.7px;color:#1a1a1a;left:245.00px;top:259.00px;transform:scaleX(1.007);transform-origin:0 0;">tidak boleh terlanggar. Melanggar asumsi mengurangi keabsahan kesimpulan.</div>
<div class="a" style="left:236.70px;top:272.00px;width:2.70px;height:2.70px;background:#222;"></div>
<div class="t" style="font-size:7.8px;color:#3a3a3a;left:247.20px;top:270.00px;transform:scaleX(0.923);transform-origin:0 0;">ASUMSI:</div>
<div class="a" style="left:248.20px;top:283.00px;width:2.00px;height:2.00px;background:#1a1a1a;border-radius:50%;"></div>
<div class="t" style="font-size:8.7px;color:#1a1a1a;left:257.50px;top:280.00px;transform:scaleX(1.009);transform-origin:0 0;">Kurva regresi harus diketahui <span style="font-family:'DejaVu Sans',sans-serif">→</span> hubungannya linear atau non linear</div>
<div class="a" style="left:248.20px;top:293.00px;width:2.00px;height:2.00px;background:#e8141c;border-radius:50%;"></div>
<div class="t" style="font-size:8.7px;font-weight:bold;color:#e8141c;left:257.50px;top:290.00px;">Constant variance of error terms (homoscedasticity)</div>
<div class="a" style="left:248.20px;top:304.00px;width:2.00px;height:2.00px;background:#1a1a1a;border-radius:50%;"></div>
<div class="t" style="font-size:8.7px;color:#1a1a1a;left:257.50px;top:301.00px;transform:scaleX(1.011);transform-origin:0 0;">Independence of error term <span style="font-family:'DejaVu Sans',sans-serif">→</span> Autocorrelation</div>
<div class="a" style="left:248.20px;top:314.00px;width:2.00px;height:2.00px;background:#1a1a1a;border-radius:50%;"></div>
<div class="t" style="font-size:8.7px;color:#1a1a1a;left:257.50px;top:311.00px;">Normality of the error term</div>
<div class="a" style="left:248.20px;top:325.00px;width:2.00px;height:2.00px;background:#1a1a1a;border-radius:50%;"></div>
<div class="t" style="font-size:8.7px;color:#1a1a1a;left:257.50px;top:322.00px;transform:scaleX(1.007);transform-origin:0 0;">Independence of the independent variables <span style="font-family:'DejaVu Sans',sans-serif">→</span> Multicolinearity</div>
<div class="a" style="left:483.20px;top:287.80px;width:13.60px;height:0.40px;background:#7da2e6;"></div>
<div class="a" style="left:500.00px;top:287.80px;width:21.60px;height:0.40px;background:#7da2e6;"></div>
<div class="a" style="left:483.20px;top:288.90px;width:13.60px;height:0.40px;background:#7da2e6;"></div>
<div class="a" style="left:500.00px;top:288.90px;width:21.60px;height:0.40px;background:#7da2e6;"></div>
<div class="a" style="left:116.00px;top:347.30px;width:594.00px;height:17.70px;background:#e8e8e8;"></div>
<div class="a" style="left:116.00px;top:347.00px;width:594.00px;height:0.60px;background:#dadada;"></div>
<div class="t" style="font-size:8.3px;color:#555;left:122.60px;top:352.00px;">Click to add notes</div>
<div class="a" style="left:710.40px;top:101.50px;width:9.60px;height:234.00px;background:#f0f0f0;border-radius:3px;"></div>
<svg style="left:712.40px;top:104.40px;" width="5" height="3.2" viewBox="0 0 5 3.2" ><path d="M0 3.2 L2.5 0 L5 3.2z" fill="#666"/></svg>
<div class="a" style="left:713.00px;top:174.50px;width:3.60px;height:10.30px;background:#5f5f5f;border-radius:1.8px;"></div>
<svg style="left:712.40px;top:310.20px;" width="5" height="3.2" viewBox="0 0 5 3.2" ><path d="M0 0 L2.5 3.2 L5 0z" fill="#666"/></svg>
<svg style="left:712.40px;top:318.60px;" width="5" height="5.4" viewBox="0 0 5 5.4" ><path d="M0 2.6 L2.5 0 L5 2.6z M0 5.4 L2.5 2.8 L5 5.4z" fill="#666"/></svg>
<svg style="left:712.40px;top:327.20px;" width="5" height="5.4" viewBox="0 0 5 5.4" ><path d="M0 0 L2.5 2.6 L5 0z M0 2.8 L2.5 5.4 L5 2.8z" fill="#666"/></svg>
<div class="a" style="left:710.00px;top:347.60px;width:10.00px;height:17.40px;background:#f3f3f3;border-radius:2px;"></div>
<svg style="left:712.40px;top:351.20px;" width="5" height="3.2" viewBox="0 0 5 3.2" ><path d="M0 3.2 L2.5 0 L5 3.2z" fill="#666"/></svg>
<svg style="left:712.40px;top:359.40px;" width="5" height="3.2" viewBox="0 0 5 3.2" ><path d="M0 0 L2.5 3.2 L5 0z" fill="#666"/></svg>
<div class="a" style="left:0.00px;top:365.00px;width:720.00px;height:13.00px;background:#f1f0ef;"></div>
<div class="t" style="font-size:5.9px;color:#444;left:7.00px;top:371.00px;transform:scaleX(0.976);transform-origin:0 0;">Slide 9 of 24</div>
<svg style="left:49.70px;top:368.00px;" width="8" height="8" viewBox="0 0 8 8" ><path d="M.4 .6 H3 L3.8 1.4 L4.6 .6 H7.2 V6 H4.6 L3.8 6.8 L3 6 H.4z M3.8 1.4 V6.6" fill="none" stroke="#444" stroke-width=".6"/><path d="M4.8 5.2 L7.4 7.8 M7.4 5.2 L4.8 7.8" stroke="#444" stroke-width=".6"/></svg>
<div class="t" style="font-size:5.9px;color:#444;left:67.20px;top:371.00px;transform:scaleX(0.966);transform-origin:0 0;">English (Indonesia)</div>
<svg style="left:125.20px;top:367.60px;" width="7.4" height="8" viewBox="0 0 7.4 8" ><circle cx="3" cy="1.2" r=".9" fill="none" stroke="#333" stroke-width=".6"/><path d="M.4 2.8 L3 3.4 L5.6 2.8 M3 3.4 V5 M3 5 L1.4 7.6 M3 5 L4.6 7.6" fill="none" stroke="#333" stroke-width=".6"/><path d="M4.8 5 L7.2 7.4 M7.2 5 L4.8 7.4" stroke="#333" stroke-width=".6"/></svg>
<div class="t" style="font-size:5.9px;font-weight:bold;color:#333;left:135.30px;top:371.00px;">Accessibility: Investigate</div>
<svg style="left:483.60px;top:367.80px;" width="9" height="7.6" viewBox="0 0 9 7.6" ><path d="M1 5 H8 M0 6.4 H9 M0 7.4 H9" stroke="#555" stroke-width=".6"/><path d="M2.6 3.4 L4.5 1.6 L6.4 3.4" fill="none" stroke="#555" stroke-width=".6"/></svg>
<div class="t" style="font-size:5.8px;color:#444;left:494.00px;top:371.00px;transform:scaleX(0.990);transform-origin:0 0;">Notes</div>
<div class="a" style="left:521.00px;top:365.60px;width:20.00px;height:12.00px;background:#d4d3d2;"></div>
<svg style="left:527.20px;top:368.40px;" width="8" height="6.8" viewBox="0 0 8 6.8" ><rect x=".4" y=".4" width="7.2" height="6" fill="none" stroke="#333" stroke-width=".7"/><rect x="1.8" y="1.8" width="2.4" height="1.8" fill="none" stroke="#333" stroke-width=".5"/><path d="M1.6 5 H6.4" stroke="#333" stroke-width=".5"/></svg>
<svg style="left:550.40px;top:368.20px;" width="8" height="7" viewBox="0 0 8 7" ><rect x=".4" y=".4" width="2.8" height="2.4" fill="none" stroke="#444" stroke-width=".7"/><rect x="4.6" y=".4" width="2.8" height="2.4" fill="none" stroke="#444" stroke-width=".7"/><rect x=".4" y="4.2" width="2.8" height="2.4" fill="none" stroke="#444" stroke-width=".7"/><rect x="4.6" y="4.2" width="2.8" height="2.4" fill="none" stroke="#444" stroke-width=".7"/></svg>
<svg style="left:572.40px;top:368.40px;" width="8" height="6.6" viewBox="0 0 8 6.6" ><rect x=".4" y=".4" width="7.2" height="5.6" fill="none" stroke="#444" stroke-width=".7"/><path d="M4 .4 V6 M1.4 2 H3 M1.4 3.4 H3 M5 2 H6.6 M5 3.4 H6.6" stroke="#444" stroke-width=".5"/></svg>
<svg style="left:594.60px;top:367.80px;" width="8" height="8" viewBox="0 0 8 8" ><rect x=".4" y=".6" width="7.2" height="4.4" fill="none" stroke="#444" stroke-width=".7"/><path d="M4 5 V7.4 M2.2 7.6 H5.8" stroke="#444" stroke-width=".7"/></svg>
<div class="a" style="left:613.40px;top:371.80px;width:3.40px;height:0.60px;background:#555;"></div>
<div class="a" style="left:621.00px;top:371.80px;width:54.80px;height:0.70px;background:#8a8a8a;"></div>
<div class="a" style="left:648.00px;top:370.20px;width:0.70px;height:3.80px;background:#777;"></div>
<div class="a" style="left:634.60px;top:368.90px;width:3.60px;height:5.90px;background:#555;border-radius:.6px;"></div>
<svg style="left:679.20px;top:370.00px;" width="4" height="4" viewBox="0 0 4 4" ><path d="M0 2 H4 M2 0 V4" stroke="#555" stroke-width=".6"/></svg>
<div class="t" style="font-size:5.6px;color:#444;left:690.00px;top:371.00px;transform:scaleX(0.990);transform-origin:0 0;">59%</div>
<svg style="left:709.40px;top:367.80px;" width="8" height="8" viewBox="0 0 8 8" ><path d="M1.4 2.6 H6.6 V5.8 H1.4z" fill="none" stroke="#444" stroke-width=".7"/><path d="M4 .2 L5 1.4 H3z M4 8 L5 6.8 H3z M.1 4.2 L1 3.4 V5z M7.9 4.2 L7 3.4 V5z" fill="#444"/></svg>
<div class="a" style="left:0.00px;top:0.00px;width:1.00px;height:378.00px;background:#a3a3a3;"></div>
</div>
<div class="a" style="left:10.50px;top:453.00px;width:37.50px;height:37.50px;background:#27282c;border-radius:50%;border:1.2px solid #c9c9cb;"></div>
<svg style="left:21.00px;top:464.00px;" width="16" height="16" viewBox="0 0 16 16" fill="none" stroke="#1ed47f" stroke-width="1.1"><path d="M1.6 12.2 L11.2 1.7 a1 1 0 0 1 1.3 0 L14.2 3.3 a1 1 0 0 1 0 1.3 L4.5 14.2 C3 15 1.8 14.9 1.4 14.6 C1 14.2 1 13.2 1.6 12.2z"/><path d="M9.3 3.8 L12.2 6.7"/></svg>
<div id="bottombar">
<div class="t" style="font-size:9.6px;left:26.92px;top:29.00px;transform:scaleX(0.965);transform-origin:50% 0;-webkit-text-stroke:.4px #fff;">Audio</div>
<div class="t" style="font-size:9.6px;left:96.31px;top:29.00px;transform:scaleX(0.948);transform-origin:50% 0;-webkit-text-stroke:.4px #fff;">Video</div>
<div class="t" style="font-size:9.6px;left:394.22px;top:29.00px;transform:scaleX(0.913);transform-origin:50% 0;-webkit-text-stroke:.4px #fff;">Participants</div>
<div class="t" style="font-size:9.6px;left:491.46px;top:29.00px;transform:scaleX(0.873);transform-origin:50% 0;-webkit-text-stroke:.4px #fff;">Chat</div>
<div class="t" style="font-size:9.6px;left:552.46px;top:29.00px;transform:scaleX(0.877);transform-origin:50% 0;-webkit-text-stroke:.4px #fff;">React</div>
<div class="t" style="font-size:9.6px;left:619.19px;top:29.00px;transform:scaleX(0.859);transform-origin:50% 0;-webkit-text-stroke:.4px #fff;">Share</div>
<div class="t" style="font-size:9.6px;left:689.56px;top:29.00px;transform:scaleX(0.960);transform-origin:50% 0;-webkit-text-stroke:.4px #fff;">More</div>
<div class="t" style="font-size:9.6px;left:974.92px;top:29.00px;transform:scaleX(0.853);transform-origin:50% 0;-webkit-text-stroke:.4px #fff;">Leave</div>
<svg style="left:58.50px;top:14.10px;" width="8" height="5" viewBox="0 0 8 5" ><path d="M1 4.2 L4 1.2 L7 4.2" fill="none" stroke="#e8e8e8" stroke-width="1.2"/></svg>
<svg style="left:132.40px;top:14.10px;" width="8" height="5" viewBox="0 0 8 5" ><path d="M1 4.2 L4 1.2 L7 4.2" fill="none" stroke="#e8e8e8" stroke-width="1.2"/></svg>
<svg style="left:454.60px;top:14.10px;" width="8" height="5" viewBox="0 0 8 5" ><path d="M1 4.2 L4 1.2 L7 4.2" fill="none" stroke="#e8e8e8" stroke-width="1.2"/></svg>
<svg style="left:522.00px;top:14.10px;" width="8" height="5" viewBox="0 0 8 5" ><path d="M1 4.2 L4 1.2 L7 4.2" fill="none" stroke="#e8e8e8" stroke-width="1.2"/></svg>
<svg style="left:582.00px;top:14.10px;" width="8" height="5" viewBox="0 0 8 5" ><path d="M1 4.2 L4 1.2 L7 4.2" fill="none" stroke="#e8e8e8" stroke-width="1.2"/></svg>
<svg style="left:655.50px;top:14.10px;" width="8" height="5" viewBox="0 0 8 5" ><path d="M1 4.2 L4 1.2 L7 4.2" fill="none" stroke="#e8e8e8" stroke-width="1.2"/></svg>
<svg style="left:30.00px;top:7.00px;" width="18" height="19" viewBox="0 0 18 19" fill="none" stroke="#f2f2f2" stroke-width="1.1"><rect x="6.3" y="1" width="5.4" height="10" rx="2.7"/><path d="M3.6 8 v1 a5.4 5.4 0 0 0 10.8 0 v-1"/><path d="M9 14.5 V17.5 M6 17.5 H12"/></svg>
<svg style="left:30.00px;top:7.00px;" width="18" height="19" viewBox="0 0 18 19" ><path d="M0.5 17.8 L17.6 1" stroke="#e8114f" stroke-width="1.9"/></svg>
<svg style="left:99.50px;top:11.30px;" width="19" height="11" viewBox="0 0 19 11" fill="none" stroke="#f2f2f2" stroke-width="1.2"><rect x="0.6" y="0.6" width="12" height="9.8" rx="2.2"/><path d="M12.6 4.2 L17.6 1.2 a.5 .5 0 0 1 .8 .4 V9.4 a.5 .5 0 0 1 -.8 .4 L12.6 6.8"/></svg>
<svg style="left:412.00px;top:10.00px;" width="15" height="14" viewBox="0 0 15 14" fill="none" stroke="#f2f2f2" stroke-width="1.1"><circle cx="4.6" cy="2.6" r="2"/><circle cx="9.6" cy="5" r="2.2"/><path d="M5.8 13 H2.4 a1.9 1.9 0 0 1 -1.9 -1.9 a3.4 3.4 0 0 1 3.4 -3.4 H5.6"/><rect x="5.8" y="9" width="8" height="4" rx="2"/></svg>
<div class="t" style="font-size:9.4px;color:#e8e8e8;left:431.50px;top:11.00px;transform:scaleX(0.813);transform-origin:0 0;">13</div>
<svg style="left:493.30px;top:10.00px;" width="17" height="15" viewBox="0 0 17 15" fill="none" stroke="#f2f2f2" stroke-width="1.2"><path d="M2.6 .6 H14 a2 2 0 0 1 2 2 V9 a2 2 0 0 1 -2 2 H7.2 L4 14 V11 H2.6 a2 2 0 0 1 -2 -2 V2.6 a2 2 0 0 1 2 -2z"/></svg>
<svg style="left:556.00px;top:8.60px;" width="19" height="16" viewBox="0 0 19 16" fill="none" stroke="#f2f2f2" stroke-width="1.1"><path d="M9.2 15.2 C4 11.5 .8 8.6 .8 5 C.8 2.4 2.8 .8 4.9 .8 C6.6 .8 8.2 1.8 9.2 3.4 C10.2 1.8 11.8 .8 13.5 .8 C15.6 .8 17.6 2.4 17.6 5 C17.6 8.6 14.4 11.5 9.2 15.2z" transform="rotate(-12 9 8)"/></svg>
<svg style="left:623.00px;top:10.00px;" width="18.4" height="13.2" viewBox="0 0 18.4 13.2" fill="none" stroke="#f2f2f2" stroke-width="1.2"><rect x=".6" y=".6" width="17.2" height="12" rx="1.6"/><path d="M9.2 10 V3.4 M6.4 6 L9.2 3.2 L12 6"/></svg>
<svg style="left:691.00px;top:7.50px;" width="18" height="18" viewBox="0 0 18 18" ><circle cx="9" cy="9" r="8.4" fill="none" stroke="#f2f2f2" stroke-width="1.1"/><circle cx="5" cy="9" r="1" fill="#f2f2f2"/><circle cx="9" cy="9" r="1" fill="#f2f2f2"/><circle cx="13" cy="9" r="1" fill="#f2f2f2"/></svg>
<svg style="left:979.00px;top:7.00px;" width="18" height="19" viewBox="0 0 18 19" ><path d="M7.2 .6 H17.2 V16.2 L12.4 18.2 V3.6 L17 .8" fill="none" stroke="#e0124f" stroke-width="1.2"/><circle cx="6" cy="4.2" r="1.9" fill="none" stroke="#f2f2f2" stroke-width="1.1"/><path d="M4.4 6.8 C3 7.6 1.6 9.6 1 11.4 L2.6 12 L4.2 9.8 L3.8 12.6 L1.4 17 L3.2 17.8 L6 13.6 L6.6 17.6 H8.6 L8.2 12.4 L8.6 9.6 L10 11.8 L11.2 11 L9 7.2 C8 6.4 5.6 6.2 4.4 6.8z" fill="none" stroke="#f2f2f2" stroke-width="1"/></svg>
</div>
</body></html>
